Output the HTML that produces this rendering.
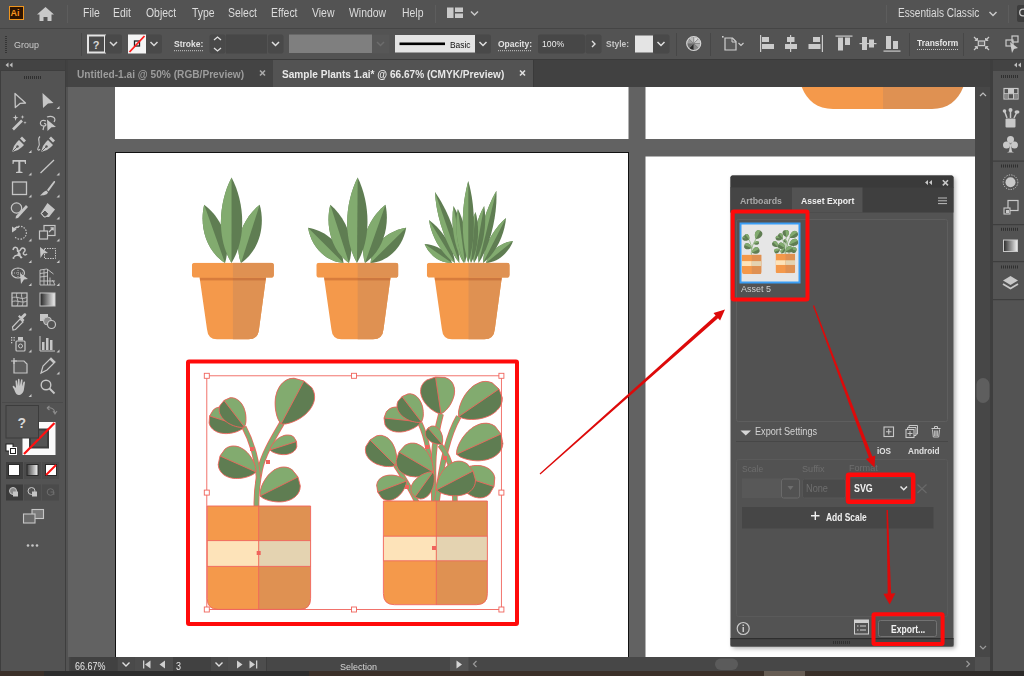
<!DOCTYPE html><html><head><meta charset="utf-8"><style>
html,body{margin:0;padding:0;width:1024px;height:676px;overflow:hidden;background:#535353;font-family:"Liberation Sans", sans-serif;}
.r{position:absolute;}
.t{position:absolute;white-space:nowrap;line-height:1;}
svg{position:absolute;left:0;top:0;}
</style></head><body>

<div class="r" style="left:0px;top:0px;width:1024px;height:28px;background:#535353;"></div>
<div class="r" style="left:0px;top:28px;width:1024px;height:1px;background:#454545;"></div>
<div class="r" style="left:0px;top:29px;width:1024px;height:30px;background:#535353;"></div>
<div class="r" style="left:0px;top:59px;width:1024px;height:1px;background:#3a3a3a;"></div>
<div class="r" style="left:66px;top:60px;width:926px;height:27px;background:#414141;"></div>
<div class="r" style="left:68px;top:60px;width:205px;height:27px;background:#444444;"></div>
<div class="r" style="left:273px;top:60px;width:260px;height:27px;background:#535353;"></div>
<div class="r" style="left:533px;top:60px;width:1px;height:27px;background:#3a3a3a;"></div>
<div class="r" style="left:0px;top:60px;width:66px;height:616px;background:#3e3e3e;"></div>
<div class="r" style="left:0px;top:60px;width:65px;height:10px;background:#434343;"></div>
<div class="r" style="left:1px;top:71px;width:64px;height:600px;background:#535353;"></div>
<div class="r" style="left:68px;top:87px;width:907px;height:570px;background:#626262;"></div>
<div class="r" style="left:975px;top:87px;width:15px;height:570px;background:#474747;"></div>
<div class="r" style="left:990px;top:60px;width:34px;height:616px;background:#3e3e3e;"></div>
<div class="r" style="left:993px;top:60px;width:31px;height:11px;background:#434343;"></div>
<div class="r" style="left:993px;top:71px;width:31px;height:600px;background:#535353;"></div>
<div class="r" style="left:69px;top:657px;width:906px;height:14px;background:#474747;"></div>
<div class="r" style="left:975px;top:657px;width:15px;height:14px;background:#515151;"></div>
<div class="r" style="left:0px;top:671px;width:1024px;height:5px;background:#3b3029;"></div>
<div class="r" style="left:44px;top:671px;width:265px;height:5px;background:#2d2d2d;"></div>
<div class="r" style="left:764px;top:671px;width:41px;height:5px;background:#675d54;"></div>
<div class="r" style="left:808px;top:671px;width:216px;height:5px;background:linear-gradient(90deg,#3a3029,#2b2928);"></div>
<div class="r" style="left:8.6px;top:6.3px;width:13.6px;height:12px;background:#2e1400;border:1px solid #f0961e;"></div>
<div class="t" style="left:10.6px;top:8.68px;font-size:9px;color:#f7961f;font-weight:bold;letter-spacing:-0.2px;">Ai</div>
<svg width="1024" height="30" style="top:0"><path d="M45.5 7 L37 14.5 L39.5 14.5 L39.5 21 L43.5 21 L43.5 17 L47.5 17 L47.5 21 L51.5 21 L51.5 14.5 L54 14.5 Z" fill="#c9c9c9"/><rect x="67" y="5" width="1" height="18" fill="#5d5d5d"/><rect x="435" y="5" width="1" height="18" fill="#5d5d5d"/><rect x="886" y="5" width="1" height="18" fill="#5d5d5d"/><rect x="1008" y="5" width="1" height="18" fill="#5d5d5d"/><rect x="447" y="7.5" width="6.5" height="10.5" fill="#c9c9c9"/><rect x="455" y="7.5" width="8" height="4.5" fill="#c9c9c9"/><rect x="455" y="13.5" width="8" height="4.5" fill="#c9c9c9"/><path d="M471 11.5 L474.5 15 L478 11.5" stroke="#c9c9c9" stroke-width="1.5" fill="none"/><path d="M989.5 12 L993 15.5 L996.5 12" stroke="#c9c9c9" stroke-width="1.5" fill="none"/><rect x="1017" y="5" width="10" height="17" rx="2" fill="#3d3d3d"/><circle cx="1023" cy="12.5" r="3.3" stroke="#c9c9c9" stroke-width="1.3" fill="none"/></svg>
<div class="t" style="left:82.5px;top:6.84px;font-size:12px;color:#dcdcdc;font-weight:normal;transform:scaleX(0.87);transform-origin:0 0;">File</div>
<div class="t" style="left:112.8px;top:6.84px;font-size:12px;color:#dcdcdc;font-weight:normal;transform:scaleX(0.87);transform-origin:0 0;">Edit</div>
<div class="t" style="left:145.5px;top:6.84px;font-size:12px;color:#dcdcdc;font-weight:normal;transform:scaleX(0.87);transform-origin:0 0;">Object</div>
<div class="t" style="left:191.6px;top:6.84px;font-size:12px;color:#dcdcdc;font-weight:normal;transform:scaleX(0.87);transform-origin:0 0;">Type</div>
<div class="t" style="left:228.3px;top:6.84px;font-size:12px;color:#dcdcdc;font-weight:normal;transform:scaleX(0.87);transform-origin:0 0;">Select</div>
<div class="t" style="left:271px;top:6.84px;font-size:12px;color:#dcdcdc;font-weight:normal;transform:scaleX(0.87);transform-origin:0 0;">Effect</div>
<div class="t" style="left:311.9px;top:6.84px;font-size:12px;color:#dcdcdc;font-weight:normal;transform:scaleX(0.87);transform-origin:0 0;">View</div>
<div class="t" style="left:348.6px;top:6.84px;font-size:12px;color:#dcdcdc;font-weight:normal;transform:scaleX(0.87);transform-origin:0 0;">Window</div>
<div class="t" style="left:401.7px;top:6.84px;font-size:12px;color:#dcdcdc;font-weight:normal;transform:scaleX(0.87);transform-origin:0 0;">Help</div>
<div class="t" style="left:897.7px;top:6.84px;font-size:12px;color:#dcdcdc;font-weight:normal;transform:scaleX(0.84);transform-origin:0 0;">Essentials Classic</div>
<svg width="1024" height="60" style="top:0"><rect x="5" y="36" width="2" height="1" fill="#353535"/><rect x="5" y="38" width="2" height="1" fill="#353535"/><rect x="5" y="40" width="2" height="1" fill="#353535"/><rect x="5" y="42" width="2" height="1" fill="#353535"/><rect x="5" y="44" width="2" height="1" fill="#353535"/><rect x="5" y="46" width="2" height="1" fill="#353535"/><rect x="5" y="48" width="2" height="1" fill="#353535"/><rect x="5" y="50" width="2" height="1" fill="#353535"/><rect x="5" y="52" width="2" height="1" fill="#353535"/><rect x="81" y="33" width="1" height="23" fill="#474747"/><rect x="88" y="35.5" width="17" height="17" fill="#4a4a4a" stroke="#e4e4e4" stroke-width="2"/><rect x="105" y="34.5" width="17" height="19" rx="2" fill="#494949"/><path d="M110 42 L113.5 45.5 L117 42" stroke="#d8d8d8" stroke-width="1.5" fill="none"/><rect x="128" y="34.5" width="18" height="19" fill="#f4f4f4"/><rect x="134.5" y="41" width="5" height="5" fill="none" stroke="#222" stroke-width="1.3"/><path d="M129.5 52 L144.5 36" stroke="#ff1a1a" stroke-width="1.8"/><rect x="146" y="34.5" width="16" height="19" rx="2" fill="#494949"/><path d="M150.5 42 L154 45.5 L157.5 42" stroke="#d8d8d8" stroke-width="1.5" fill="none"/><path d="M174 50.7 L203 50.7" stroke="#c8c8c8" stroke-width="1" stroke-dasharray="1 1"/><rect x="209.5" y="34.5" width="16" height="19" rx="2" fill="#494949"/><path d="M214 40 L217.5 37 L221 40 M214 48 L217.5 51 L221 48" stroke="#e0e0e0" stroke-width="1.3" fill="none"/><rect x="226" y="34.5" width="41" height="19" fill="#474747"/><rect x="268" y="34.5" width="15.5" height="19" rx="2" fill="#494949"/><path d="M272 42 L275.5 45.5 L279 42" stroke="#e0e0e0" stroke-width="1.5" fill="none"/><rect x="289" y="34.5" width="83" height="18.5" fill="#7f7f7f"/><rect x="372" y="34.5" width="17.5" height="19" rx="1" fill="#575757"/><path d="M377 42 L380.5 45.5 L384 42" stroke="#6c6c6c" stroke-width="1.5" fill="none"/><rect x="395" y="35" width="80" height="17.5" fill="#e4e4e4"/><rect x="399.5" y="42.5" width="45.5" height="2.6" fill="#000"/><rect x="475" y="34.5" width="16" height="19" rx="2" fill="#494949"/><path d="M479.5 42 L483 45.5 L486.5 42" stroke="#e0e0e0" stroke-width="1.5" fill="none"/><path d="M498 50.7 L532 50.7" stroke="#c8c8c8" stroke-width="1" stroke-dasharray="1 1"/><rect x="538" y="34.5" width="47" height="19" rx="2" fill="#474747"/><rect x="585.5" y="34.5" width="16" height="19" rx="2" fill="#494949"/><path d="M592 41 L595 44 L592 47" stroke="#e0e0e0" stroke-width="1.4" fill="none"/><rect x="635" y="35.5" width="18" height="17" fill="#e4e4e4"/><rect x="653" y="34.5" width="16.5" height="19" rx="2" fill="#494949"/><path d="M657.5 42 L661 45.5 L664.5 42" stroke="#e0e0e0" stroke-width="1.5" fill="none"/><rect x="676" y="33" width="1" height="23" fill="#474747"/><path d="M693.7 43.5 L693.70 36.70 A6.8 6.8 0 0 1 698.51 38.69 Z" fill="#d8d8d8" stroke="#7a7a7a" stroke-width="0.5"/><path d="M693.7 43.5 L698.51 38.69 A6.8 6.8 0 0 1 700.50 43.50 Z" fill="#c8c8c8" stroke="#7a7a7a" stroke-width="0.5"/><path d="M693.7 43.5 L700.50 43.50 A6.8 6.8 0 0 1 698.51 48.31 Z" fill="#b0b0b0" stroke="#7a7a7a" stroke-width="0.5"/><path d="M693.7 43.5 L698.51 48.31 A6.8 6.8 0 0 1 693.70 50.30 Z" fill="#8a8a8a" stroke="#7a7a7a" stroke-width="0.5"/><path d="M693.7 43.5 L693.70 50.30 A6.8 6.8 0 0 1 688.89 48.31 Z" fill="#2a2a2a" stroke="#7a7a7a" stroke-width="0.5"/><path d="M693.7 43.5 L688.89 48.31 A6.8 6.8 0 0 1 686.90 43.50 Z" fill="#6a6a6a" stroke="#7a7a7a" stroke-width="0.5"/><path d="M693.7 43.5 L686.90 43.50 A6.8 6.8 0 0 1 688.89 38.69 Z" fill="#9a9a9a" stroke="#7a7a7a" stroke-width="0.5"/><path d="M693.7 43.5 L688.89 38.69 A6.8 6.8 0 0 1 693.70 36.70 Z" fill="#bcbcbc" stroke="#7a7a7a" stroke-width="0.5"/><circle cx="693.7" cy="43.5" r="7" fill="none" stroke="#d4d4d4" stroke-width="1.2"/><rect x="710" y="33" width="1" height="23" fill="#474747"/><path d="M725 38 L732.5 38 L736 41.5 L736 50 L725 50 Z" fill="#5a5a5a" stroke="#cfcfcf" stroke-width="1.2"/><path d="M732 38 L732 42 L736 42" stroke="#cfcfcf" stroke-width="1" fill="none"/><rect x="722" y="36" width="1.6" height="1.6" fill="#cfcfcf"/><path d="M738.5 43 L741 45.5 L743.5 43" stroke="#cfcfcf" stroke-width="1.1" fill="none"/><rect x="760" y="35" width="1.2" height="17" fill="#cbcbcb"/><rect x="762" y="37" width="7" height="5" fill="#cbcbcb"/><rect x="762" y="44" width="12" height="5" fill="#cbcbcb"/><rect x="790" y="35" width="1.2" height="17" fill="#cbcbcb"/><rect x="787" y="37" width="7.5" height="5" fill="#cbcbcb"/><rect x="785" y="44" width="12" height="5" fill="#cbcbcb"/><rect x="821.8" y="35" width="1.2" height="17" fill="#cbcbcb"/><rect x="813" y="37" width="7" height="5" fill="#cbcbcb"/><rect x="808.5" y="44" width="12" height="5" fill="#cbcbcb"/><rect x="835.5" y="35.5" width="17" height="1.2" fill="#cbcbcb"/><rect x="838" y="37.5" width="5" height="13" fill="#cbcbcb"/><rect x="845" y="37.5" width="5" height="7.5" fill="#cbcbcb"/><rect x="859.5" y="43" width="17" height="1.2" fill="#cbcbcb"/><rect x="862" y="37" width="5" height="13" fill="#cbcbcb"/><rect x="869" y="39.5" width="5" height="8" fill="#cbcbcb"/><rect x="883.5" y="50.5" width="17" height="1.2" fill="#cbcbcb"/><rect x="886" y="36" width="5" height="13" fill="#cbcbcb"/><rect x="893" y="41" width="5" height="8" fill="#cbcbcb"/><rect x="909" y="33" width="1" height="23" fill="#474747"/><path d="M917 49.5 L958 49.5" stroke="#c8c8c8" stroke-width="1" stroke-dasharray="1 1"/><rect x="963" y="33" width="1" height="23" fill="#474747"/><rect x="978.3" y="41" width="6.3" height="4.6" fill="#6a6a6a" stroke="#cbcbcb" stroke-width="1.2"/><path d="M974 37 L977 40 M989 37 L986 40 M974 50 L977 47 M989 50 L986 47" stroke="#cbcbcb" stroke-width="1.2"/><path d="M975 40.5 L977.5 40.5 L977.5 38 Z M988 40.5 L985.5 40.5 L985.5 38 Z M975 46.5 L977.5 46.5 L977.5 49 Z M988 46.5 L985.5 46.5 L985.5 49 Z" fill="#cbcbcb" stroke="#cbcbcb" stroke-width="0.8"/><rect x="1006" y="40" width="7" height="6" fill="none" stroke="#cbcbcb" stroke-width="1.2"/><rect x="1012" y="36" width="6" height="6" fill="none" stroke="#cbcbcb" stroke-width="1.2"/><path d="M1010 42 L1018 48 L1014 49 L1012 53 Z" fill="#cbcbcb"/></svg>
<div class="t" style="left:13.9px;top:39.77px;font-size:9.6px;color:#cacaca;font-weight:normal;transform:scaleX(0.933);transform-origin:0 0;">Group</div>
<div class="t" style="left:173.9px;top:39.83px;font-size:9.3px;color:#e2e2e2;font-weight:bold;transform:scaleX(0.9138);transform-origin:0 0;">Stroke:</div>
<div class="t" style="left:449.5px;top:39.96px;font-size:9.5px;color:#111;font-weight:normal;transform:scaleX(0.886);transform-origin:0 0;">Basic</div>
<div class="t" style="left:498.4px;top:39.63px;font-size:9.3px;color:#e2e2e2;font-weight:bold;transform:scaleX(0.9143);transform-origin:0 0;">Opacity:</div>
<div class="t" style="left:541.6px;top:39.16px;font-size:9.5px;color:#ececec;font-weight:normal;transform:scaleX(0.9131);transform-origin:0 0;">100%</div>
<div class="t" style="left:606.3px;top:38.96px;font-size:9.5px;color:#c8c8c8;font-weight:bold;transform:scaleX(0.8889);transform-origin:0 0;">Style:</div>
<div class="t" style="left:916.5px;top:39.33px;font-size:9.3px;color:#e8e8e8;font-weight:bold;transform:scaleX(0.9077);transform-origin:0 0;">Transform</div>
<div class="t" style="left:92.8px;top:39.89px;font-size:11px;color:#d8d8d8;font-weight:bold;">?</div>
<div class="t" style="left:77.1px;top:68.74px;font-size:10.7px;color:#9c9c9c;font-weight:bold;transform:scaleX(0.9489);transform-origin:0 0;">Untitled-1.ai @ 50% (RGB/Preview)</div>
<div class="t" style="left:282.0px;top:68.74px;font-size:10.7px;color:#e8e8e8;font-weight:bold;transform:scaleX(0.9435);transform-origin:0 0;">Sample Plants 1.ai* @ 66.67% (CMYK/Preview)</div>
<svg width="1024" height="90" style="top:0"><path d="M260 70.5 L265 75.5 M265 70.5 L260 75.5" stroke="#aaaaaa" stroke-width="1.6"/><path d="M520 70.5 L525 75.5 M525 70.5 L520 75.5" stroke="#e0e0e0" stroke-width="1.6"/><path d="M5.5 65 L8.5 62.5 L8.5 67.5 Z M9.5 65 L12.5 62.5 L12.5 67.5 Z" fill="#bdbdbd"/><path d="M1014 65 L1017 62.5 L1017 67.5 Z M1018 65 L1021 62.5 L1021 67.5 Z" fill="#bdbdbd"/><rect x="24" y="76" width="1" height="3" fill="#2f2f2f"/><rect x="26" y="76" width="1" height="3" fill="#2f2f2f"/><rect x="28" y="76" width="1" height="3" fill="#2f2f2f"/><rect x="30" y="76" width="1" height="3" fill="#2f2f2f"/><rect x="32" y="76" width="1" height="3" fill="#2f2f2f"/><rect x="34" y="76" width="1" height="3" fill="#2f2f2f"/><rect x="36" y="76" width="1" height="3" fill="#2f2f2f"/><rect x="38" y="76" width="1" height="3" fill="#2f2f2f"/><rect x="40" y="76" width="1" height="3" fill="#2f2f2f"/><rect x="1001" y="75" width="1" height="3" fill="#2f2f2f"/><rect x="1003" y="75" width="1" height="3" fill="#2f2f2f"/><rect x="1005" y="75" width="1" height="3" fill="#2f2f2f"/><rect x="1007" y="75" width="1" height="3" fill="#2f2f2f"/><rect x="1009" y="75" width="1" height="3" fill="#2f2f2f"/><rect x="1011" y="75" width="1" height="3" fill="#2f2f2f"/><rect x="1013" y="75" width="1" height="3" fill="#2f2f2f"/><rect x="1015" y="75" width="1" height="3" fill="#2f2f2f"/><rect x="1017" y="75" width="1" height="3" fill="#2f2f2f"/></svg>
<svg width="70" height="560" style="top:0"><path d="M15 93.5 L25.5 103 L20.3 103.3 L15.3 107.5 Z" fill="none" stroke="#c6c6c6" stroke-width="1.3" stroke-linejoin="round"/><path d="M42.5 93 L53.5 103 L48 103.5 L43 108 Z" fill="#c6c6c6"/><path d="M59.5 106 L59.5 109 L56.5 109 Z" fill="#c6c6c6"/><path d="M13 129.5 L22 120.5" stroke="#c6c6c6" stroke-width="2.6"/><path d="M15.5 114.5 L16.3 117 L18.5 117.3 L16.5 118.3 L15.5 121 L14.8 118.3 L12.5 117.5 L14.8 117 Z M22.5 115 L23 116.5 L24.5 117 L23 117.5 L22.5 119 L22 117.5 L20.5 117 L22 116.5 Z M25 121 L25.4 122.3 L26.7 122.7 L25.4 123 L25 124.5 L24.6 123 L23.3 122.7 L24.6 122.3 Z" fill="#c6c6c6"/><path d="M46 121 C40 118 38 126 44 126 C47 126 46 123 44 123.5 M44 126 L43 130" fill="none" stroke="#c6c6c6" stroke-width="1.2"/><path d="M47 117 C52 115 57 118 54 122" fill="none" stroke="#c6c6c6" stroke-width="1.2"/><path d="M47 119.5 L56 127 L51.5 127.3 L47.5 131 Z" fill="#c6c6c6"/><path d="M19 140 L24 145 L22 147 L18 150 L12 152 L14 146 L17 142 Z" fill="#c6c6c6"/><path d="M20 138.5 L22 136.5 L26 140.5 L24 142.5 Z" fill="#c6c6c6"/><path d="M12.5 151.5 L17 147" stroke="#535353" stroke-width="0.9"/><circle cx="17.5" cy="146.5" r="1.2" fill="#535353"/><path d="M31.5 150 L31.5 153 L28.5 153 Z" fill="#c6c6c6"/><path d="M48 140 L53 145 L51 147 L47 150 L41 152 L43 146 L46 142 Z" fill="#c6c6c6"/><path d="M49 138.5 L51 136.5 L55 140.5 L53 142.5 Z" fill="#c6c6c6"/><path d="M41.5 151.5 L46 147" stroke="#535353" stroke-width="0.9"/><circle cx="46.5" cy="146.5" r="1.2" fill="#535353"/><path d="M40 136.5 C36 140 42 142 38 148 C37 150 39 151 40 149" fill="none" stroke="#c6c6c6" stroke-width="1.1"/><path d="M12.5 160 L26 160 L26 164 L25 164 L24.5 161.8 L20.3 161.8 L20.3 171.5 L22.5 172 L22.5 173 L16 173 L16 172 L18.3 171.5 L18.3 161.8 L14 161.8 L13.5 164 L12.5 164 Z" fill="#c6c6c6"/><path d="M31.5 172.5 L31.5 175.5 L28.5 175.5 Z" fill="#c6c6c6"/><path d="M40.5 173 L54 160" stroke="#c6c6c6" stroke-width="1.3"/><path d="M59.5 172.5 L59.5 175.5 L56.5 175.5 Z" fill="#c6c6c6"/><rect x="12.5" y="182" width="14" height="12.5" fill="#5b5b5b" stroke="#c6c6c6" stroke-width="1.3"/><path d="M31.5 194.5 L31.5 197.5 L28.5 197.5 Z" fill="#c6c6c6"/><path d="M47 190 L53.5 181.5 C55 180.5 55.5 181.5 54.8 182.8 L48.5 191.5 Z" fill="#c6c6c6"/><path d="M46.3 190.6 L48 192.3 C47 195 44 195.5 40 195.5 C42 194 43.5 191.5 46.3 190.6 Z" fill="#c6c6c6"/><path d="M59.5 194.5 L59.5 197.5 L56.5 197.5 Z" fill="#c6c6c6"/><circle cx="16.5" cy="208" r="5.2" fill="#5d5d5d" stroke="#c6c6c6" stroke-width="1.2"/><path d="M16 216 L26 205 L28 207 L18 218 L15.5 218.5 Z" fill="#c6c6c6"/><path d="M31.5 216.5 L31.5 219.5 L28.5 219.5 Z" fill="#c6c6c6"/><path d="M47.5 203 L55 209.5 L49 217 L44 217 L40.5 213.5 Z" fill="#c6c6c6"/><path d="M41.5 213 L44.5 210 L48.5 214 L46 216.5 L44 216.5 Z" fill="#535353"/><path d="M41.5 213.5 L45 210 L48.8 213.8 L45.8 217 L44 217 Z" fill="none" stroke="#c6c6c6" stroke-width="1"/><path d="M59.5 216.5 L59.5 219.5 L56.5 219.5 Z" fill="#c6c6c6"/><path d="M14 230 A6.5 6.5 0 1 1 15 237" fill="none" stroke="#c6c6c6" stroke-width="1.2" stroke-dasharray="1.5 1.3"/><path d="M19 227 A6.5 6.5 0 0 0 13 231" fill="none" stroke="#c6c6c6" stroke-width="1.5"/><path d="M12 226.5 L16.5 229.5 L12 232.5 Z" fill="#c6c6c6"/><path d="M31.5 238.5 L31.5 241.5 L28.5 241.5 Z" fill="#c6c6c6"/><rect x="44" y="225.5" width="11" height="10" fill="none" stroke="#c6c6c6" stroke-width="1.2"/><rect x="39.5" y="231" width="8" height="8" fill="#535353" stroke="#c6c6c6" stroke-width="1.2"/><path d="M49 232 L53 228 M50.5 227.8 L53.2 227.8 L53.2 230.5" fill="none" stroke="#c6c6c6" stroke-width="1.2"/><path d="M59.5 238.5 L59.5 241.5 L56.5 241.5 Z" fill="#c6c6c6"/><path d="M13 250 C14 246 18 247 17.5 250 C17 253 20 251 21 249 C23 246 27 250 24 252 C22 254 25 256 27 254 M14 257 C16 254 20 255 22 258 M17 248 L21 258" fill="none" stroke="#c6c6c6" stroke-width="1.5"/><circle cx="19" cy="254" r="1.6" fill="#c6c6c6"/><circle cx="13.5" cy="258" r="1" fill="#c6c6c6"/><path d="M31.5 260 L31.5 263 L28.5 263 Z" fill="#c6c6c6"/><path d="M40 247 L48 253 L43.5 253.5 L40.5 258 Z" fill="#c6c6c6"/><rect x="44.5" y="248.5" width="11" height="10" fill="none" stroke="#c6c6c6" stroke-width="1" stroke-dasharray="1.5 1"/><path d="M59.5 260 L59.5 263 L56.5 263 Z" fill="#c6c6c6"/><ellipse cx="18" cy="273" rx="6.5" ry="5" fill="none" stroke="#c6c6c6" stroke-width="1.2"/><path d="M12 273 L24 273 M18 268 L18 278" stroke="#c6c6c6" stroke-width="0.8" stroke-dasharray="1 1"/><path d="M20 273 L28 279 L24 279.5 L21 284 Z" fill="#c6c6c6"/><path d="M31.5 283 L31.5 286 L28.5 286 Z" fill="#c6c6c6"/><path d="M40 270 L47 269 L53.5 274 M40 270 L40 285 L55 285 M40 273.5 L47.5 272.5 M40 277 L48 276 M40 281 L55 281 M44 269.5 L44 285 M47.5 269 L47.5 285 M50 277.5 L50 285 M52.5 280 L55 285" fill="none" stroke="#c6c6c6" stroke-width="0.9"/><path d="M59.5 283 L59.5 286 L56.5 286 Z" fill="#c6c6c6"/><rect x="12" y="293" width="15" height="13" fill="none" stroke="#c6c6c6" stroke-width="1.2"/><path d="M12 298 C16 295 22 301 27 297 M12 302 C16 299 22 304 27 301 M17 293 C15 297 20 301 17 306 M22 293 C20 297 25 301 22 306" fill="none" stroke="#c6c6c6" stroke-width="0.9"/><defs><linearGradient id="tg" x1="0" x2="1"><stop offset="0" stop-color="#222"/><stop offset="1" stop-color="#f0f0f0"/></linearGradient><linearGradient id="tg2" x1="0" x2="1"><stop offset="0" stop-color="#444"/><stop offset="1" stop-color="#fafafa"/></linearGradient></defs><rect x="40" y="293" width="15" height="13" fill="url(#tg)" stroke="#c6c6c6" stroke-width="1"/><path d="M13 330 L12.5 327 L20 319 L23 322 L15.5 329.5 Z" fill="none" stroke="#c6c6c6" stroke-width="1.2"/><path d="M21 316.5 L24 313.5 C25.5 312.5 27 314 26 315.5 L23 318.5 L24.5 320 L23 321.5 L18 316.5 L19.5 315 Z" fill="#c6c6c6"/><path d="M31.5 327.5 L31.5 330.5 L28.5 330.5 Z" fill="#c6c6c6"/><rect x="40" y="314" width="8" height="7" fill="#c6c6c6"/><circle cx="47.5" cy="321" r="4" fill="#8a8a8a" stroke="#c6c6c6" stroke-width="1"/><circle cx="51.5" cy="324.5" r="4" fill="#535353" stroke="#c6c6c6" stroke-width="1.2"/><rect x="16" y="341" width="9" height="10" rx="1" fill="none" stroke="#c6c6c6" stroke-width="1.2"/><rect x="18" y="337" width="5" height="3.5" fill="#c6c6c6"/><circle cx="20.5" cy="346" r="2" fill="none" stroke="#c6c6c6" stroke-width="1"/><rect x="11.0" y="337.0" width="1.3" height="1.3" fill="#c6c6c6"/><rect x="13.5" y="337.0" width="1.3" height="1.3" fill="#c6c6c6"/><rect x="11.0" y="339.5" width="1.3" height="1.3" fill="#c6c6c6"/><rect x="13.5" y="339.5" width="1.3" height="1.3" fill="#c6c6c6"/><rect x="11.0" y="342.0" width="1.3" height="1.3" fill="#c6c6c6"/><path d="M31.5 349.5 L31.5 352.5 L28.5 352.5 Z" fill="#c6c6c6"/><path d="M40 336 L40 351 L55 351" fill="none" stroke="#c6c6c6" stroke-width="1"/><rect x="42" y="342" width="2.5" height="8" fill="#c6c6c6"/><rect x="46" y="338" width="2.5" height="12" fill="#c6c6c6"/><rect x="50" y="340" width="2.5" height="10" fill="#c6c6c6"/><path d="M59.5 349.5 L59.5 352.5 L56.5 352.5 Z" fill="#c6c6c6"/><path d="M14 361 L24 361 L27 364 L27 373 L14 373 Z" fill="#5d5d5d" stroke="#c6c6c6" stroke-width="1.2"/><path d="M11 361 L17 361 M14 358 L14 364" stroke="#c6c6c6" stroke-width="1.2"/><path d="M41 373 L43 366 L51 358 L55 362 L47 370 Z" fill="none" stroke="#c6c6c6" stroke-width="1.2"/><path d="M51 358 L55 362 L53.5 363.5 L49.5 359.5 Z" fill="#c6c6c6"/><path d="M59.5 371.5 L59.5 374.5 L56.5 374.5 Z" fill="#c6c6c6"/><path d="M14 389 C12 387 12.5 385 14 386 L16 388 L15.5 381 C15.5 380 17 380 17 381 L17.5 386 L18 379.5 C18 378.5 19.5 378.5 19.5 379.5 L19.8 386 L21 380 C21.2 379 22.6 379.2 22.5 380.2 L22 386.5 L23.5 382 C23.8 381 25.2 381.3 25 382.3 L24 389 C23.5 393 21 395 18.5 395 C16.5 395 15 392 14 389 Z" fill="#c6c6c6"/><path d="M31.5 394 L31.5 397 L28.5 397 Z" fill="#c6c6c6"/><circle cx="46" cy="385" r="4.8" fill="none" stroke="#c6c6c6" stroke-width="1.4"/><path d="M49.5 388.5 L54.5 393.5" stroke="#c6c6c6" stroke-width="2"/><rect x="2" y="402" width="61" height="1" fill="#4a4a4a"/><rect x="22.5" y="422" width="33" height="33" fill="#fafafa"/><rect x="29" y="428.5" width="20" height="20" fill="#3c3c3c"/><rect x="31" y="430.5" width="16" height="16" fill="#535353"/><path d="M24 454 L54.5 423" stroke="#ff1010" stroke-width="2.2"/><rect x="6" y="405.5" width="32.5" height="32.5" fill="#535353" stroke="#3c3c3c" stroke-width="1"/><path d="M47 408 C51 407 55 409 55 413 M53 411 L55 414 L57 411 M47 408 L49.5 406 M47 408 L49.5 410" fill="none" stroke="#8a8a8a" stroke-width="1.1"/><rect x="6" y="444" width="7" height="7" fill="#fff" stroke="#222" stroke-width="1"/><rect x="9.5" y="447.5" width="7" height="7" fill="#222" stroke="#fff" stroke-width="1"/><rect x="11" y="449" width="4" height="4" fill="#fff"/><rect x="6" y="462" width="17" height="17" fill="#3e3e3e"/><rect x="24" y="462" width="17" height="17" fill="#4b4b4b"/><rect x="42" y="462" width="17" height="17" fill="#4b4b4b"/><rect x="8.5" y="464.5" width="11" height="11" fill="#fff" stroke="#2a2a2a"/><rect x="27" y="464.5" width="11" height="11" fill="url(#tg2)" stroke="#2a2a2a"/><rect x="45.5" y="464.5" width="11" height="11" fill="#fff" stroke="#2a2a2a"/><path d="M46 475 L56 465" stroke="#ff1010" stroke-width="2"/><rect x="6" y="484.5" width="17" height="16" fill="#3b3b3b"/><rect x="24" y="484.5" width="17" height="16" fill="#4b4b4b"/><rect x="42" y="484.5" width="17" height="16" fill="#4b4b4b"/><circle cx="13" cy="491" r="3.5" fill="#888" stroke="#c6c6c6" stroke-width="1"/><rect x="13" y="491.5" width="5" height="5" fill="#c6c6c6"/><circle cx="31.5" cy="491" r="3.5" fill="#535353" stroke="#c6c6c6" stroke-width="1"/><rect x="32" y="491.5" width="5" height="5" fill="#c6c6c6"/><circle cx="50.5" cy="492" r="3.3" fill="none" stroke="#6e6e6e" stroke-width="1"/><path d="M50.5 492 L53.8 492 L53.8 495" fill="none" stroke="#6e6e6e"/><rect x="32" y="509.5" width="11.5" height="9" fill="#7a7a7a" stroke="#c6c6c6" stroke-width="1.1"/><rect x="23.5" y="514" width="11.5" height="9" fill="#6a6a6a" stroke="#c6c6c6" stroke-width="1.1"/><circle cx="28" cy="545.5" r="1.3" fill="#c6c6c6"/><circle cx="32.5" cy="545.5" r="1.3" fill="#c6c6c6"/><circle cx="37" cy="545.5" r="1.3" fill="#c6c6c6"/></svg>
<div class="t" style="left:17.5px;top:416.15px;font-size:14px;color:#d8d8d8;font-weight:bold;">?</div>
<svg width="1024" height="676" style="top:0"><defs><clipPath id="cvclip"><rect x="68" y="87" width="907" height="570"/></clipPath><filter id="abs" x="-5%" y="-5%" width="110%" height="110%"><feDropShadow dx="1" dy="1" stdDeviation="0.8" flood-color="#000" flood-opacity="0.35"/></filter></defs><g clip-path="url(#cvclip)"><rect x="115" y="60" width="513.5" height="79" fill="#fff"/><rect x="645.5" y="60" width="330" height="79" fill="#fff"/><rect x="115.5" y="152.5" width="513" height="510" fill="#fff" stroke="#111" stroke-width="1"/><rect x="645.5" y="156.5" width="330" height="510" fill="#fff"/><path d="M799.5 80 L883 80 L883 109 L833 109 C815 109 804 98 799.5 80 Z" fill="#f4994b"/><path d="M883 80 L965.5 80 C961 98 950 109 932 109 L883 109 Z" fill="#df9152"/><path d="M225 263 C205.3 250.3 199.3 224.9 204.2 204.8 C220.8 217.3 232.2 240.7 225 263 Z" fill="#5f7d52"/><path d="M225 263 C205.3 250.3 199.3 224.9 204.2 204.8 Z" fill="#82ab6f"/><path d="M241 263 C233 241.2 243.6 217.6 259.7 204.8 C265.3 224.6 260.2 249.9 241 263 Z" fill="#5f7d52"/><path d="M241 263 C233 241.2 243.6 217.6 259.7 204.8 Z" fill="#82ab6f"/><path d="M231.5 263 C215.8 237.3 219 201.4 231.6 177.4 C244.2 201.4 247.3 237.3 231.5 263 Z" fill="#5f7d52"/><path d="M231.5 263 C215.8 237.3 219 201.4 231.6 177.4 Z" fill="#82ab6f"/><clipPath id="pc191"><path d="M199.4 276.1 L266.2 276.1 L259 329.2 Q258.2 339.2 248.5 339.2 L217 339.2 Q207.8 339.2 207 329.2 Z"/></clipPath><g clip-path="url(#pc191)"><rect x="191.9" y="275.6" width="81.99999999999997" height="70" fill="#f4994b"/><rect x="232.9" y="275.6" width="40.99999999999997" height="70" fill="#df9152"/><rect x="191.9" y="277.6" width="81.99999999999997" height="2.8" fill="#b5582a" opacity="0.45"/></g><clipPath id="rc191"><rect x="191.9" y="262.7" width="81.99999999999997" height="14.900000000000034" rx="2.8"/></clipPath><g clip-path="url(#rc191)"><rect x="191.9" y="262.7" width="81.99999999999997" height="20" fill="#f4994b"/><rect x="232.9" y="262.7" width="40.99999999999997" height="20" fill="#df9152"/></g><path d="M343.5 263 C323.9 261.4 310.8 244.8 308.1 227.7 C325.2 230.4 341.9 243.4 343.5 263 Z" fill="#5f7d52"/><path d="M343.5 263 C323.9 261.4 310.8 244.8 308.1 227.7 Z" fill="#82ab6f"/><path d="M370.5 263 C372.2 243.3 389 230.3 406.2 227.7 C403.4 244.8 390.2 261.5 370.5 263 Z" fill="#5f7d52"/><path d="M370.5 263 C372.2 243.3 389 230.3 406.2 227.7 Z" fill="#82ab6f"/><path d="M349 263 C330.5 249.7 325.3 224.4 330.3 204.8 C345.8 217.8 356.2 241.4 349 263 Z" fill="#5f7d52"/><path d="M349 263 C330.5 249.7 325.3 224.4 330.3 204.8 Z" fill="#82ab6f"/><path d="M365 263 C358.4 241.1 369.6 217.5 385.5 204.8 C389.9 224.7 383.9 250 365 263 Z" fill="#5f7d52"/><path d="M365 263 C358.4 241.1 369.6 217.5 385.5 204.8 Z" fill="#82ab6f"/><path d="M357 263 C342.2 237.2 345.5 201.3 357.7 177.4 C369.5 201.5 372.2 237.4 357 263 Z" fill="#5f7d52"/><path d="M357 263 C342.2 237.2 345.5 201.3 357.7 177.4 Z" fill="#82ab6f"/><clipPath id="pc316"><path d="M323.8 276.1 L390.7 276.1 L383.5 329.2 Q382.7 339.2 373 339.2 L341.4 339.2 Q332.2 339.2 331.4 329.2 Z"/></clipPath><g clip-path="url(#pc316)"><rect x="316.3" y="275.6" width="82.09999999999997" height="70" fill="#f4994b"/><rect x="357.7" y="275.6" width="40.69999999999999" height="70" fill="#df9152"/><rect x="316.3" y="277.6" width="82.09999999999997" height="2.8" fill="#b5582a" opacity="0.45"/></g><clipPath id="rc316"><rect x="316.3" y="262.7" width="82.09999999999997" height="14.900000000000034" rx="2.8"/></clipPath><g clip-path="url(#rc316)"><rect x="316.3" y="262.7" width="82.09999999999997" height="20" fill="#f4994b"/><rect x="357.7" y="262.7" width="40.69999999999999" height="20" fill="#df9152"/></g><path d="M452 263 C439.5 263.5 428.9 254.3 424.6 244 C435.7 244.4 448.1 251.1 452 263 Z" fill="#5f7d52"/><path d="M452 263 C439.5 263.5 428.9 254.3 424.6 244 Z" fill="#82ab6f"/><path d="M486 263 C489.4 250.6 501.6 242.5 513 241 C509.2 251.8 498.8 262.2 486 263 Z" fill="#5f7d52"/><path d="M486 263 C489.4 250.6 501.6 242.5 513 241 Z" fill="#82ab6f"/><path d="M455 263 C440.8 254 431.1 235.1 429 220 C441.4 228.9 453.6 246.2 455 263 Z" fill="#5f7d52"/><path d="M455 263 C440.8 254 431.1 235.1 429 220 Z" fill="#82ab6f"/><path d="M483 263 C483.2 246.1 494.2 227.9 506 218 C504.9 233.3 496.6 252.9 483 263 Z" fill="#5f7d52"/><path d="M483 263 C483.2 246.1 494.2 227.9 506 218 Z" fill="#82ab6f"/><path d="M459.4 263 C444.7 244.2 435.9 213.9 435 192 C447.7 209.9 459.5 239.2 459.4 263 Z" fill="#5f7d52"/><path d="M459.4 263 C444.7 244.2 435.9 213.9 435 192 Z" fill="#82ab6f"/><path d="M478.6 263 C476.4 239.4 485.4 209.5 496.4 190.7 C497.5 212.4 491.5 243.2 478.6 263 Z" fill="#5f7d52"/><path d="M478.6 263 C476.4 239.4 485.4 209.5 496.4 190.7 Z" fill="#82ab6f"/><path d="M463.8 263 C453.6 247.2 450.7 223 453.5 206 C462.1 220.9 467.8 244.6 463.8 263 Z" fill="#5f7d52"/><path d="M463.8 263 C453.6 247.2 450.7 223 453.5 206 Z" fill="#82ab6f"/><path d="M474 263 C470 244.6 475.7 220.9 484.2 206 C487 223 484.1 247.2 474 263 Z" fill="#5f7d52"/><path d="M474 263 C470 244.6 475.7 220.9 484.2 206 Z" fill="#82ab6f"/><path d="M465 263 C456.2 247.7 454.5 224.8 457.9 209 C465.2 223.4 469.6 245.9 465 263 Z" fill="#5f7d52"/><path d="M465 263 C456.2 247.7 454.5 224.8 457.9 209 Z" fill="#82ab6f"/><path d="M471 263 C465.7 247.1 468.9 225.8 475.6 212 C479.7 226.8 479.1 248.3 471 263 Z" fill="#5f7d52"/><path d="M471 263 C465.7 247.1 468.9 225.8 475.6 212 Z" fill="#82ab6f"/><path d="M468.3 263 C460.1 238.4 461.7 204 468.3 181 C474.9 204 476.6 238.4 468.3 263 Z" fill="#5f7d52"/><path d="M468.3 263 C460.1 238.4 461.7 204 468.3 181 Z" fill="#82ab6f"/><clipPath id="pc426"><path d="M434.3 276.1 L502 276.1 L494.8 329.2 Q494 339.2 484.3 339.2 L451.9 339.2 Q442.7 339.2 441.9 329.2 Z"/></clipPath><g clip-path="url(#pc426)"><rect x="426.8" y="275.6" width="82.89999999999998" height="70" fill="#f4994b"/><rect x="468.5" y="275.6" width="41.19999999999999" height="70" fill="#df9152"/><rect x="426.8" y="277.6" width="82.89999999999998" height="2.8" fill="#b5582a" opacity="0.45"/></g><clipPath id="rc426"><rect x="426.8" y="262.7" width="82.89999999999998" height="14.900000000000034" rx="2.8"/></clipPath><g clip-path="url(#rc426)"><rect x="426.8" y="262.7" width="82.89999999999998" height="20" fill="#f4994b"/><rect x="468.5" y="262.7" width="41.19999999999999" height="20" fill="#df9152"/></g><path d="M256.5 507 C256 492 258 480 260 470 C263 455 272 440 282 423" fill="none" stroke="#f0645c" stroke-width="5.800000000000001" stroke-linecap="butt"/><path d="M256.5 507 C256 492 258 480 260 470 C263 455 272 440 282 423" fill="none" stroke="#82ab6f" stroke-width="4.2" stroke-linecap="butt"/><path d="M258.5 478 C257 462 252 442 244 427" fill="none" stroke="#f0645c" stroke-width="5.2" stroke-linecap="butt"/><path d="M258.5 478 C257 462 252 442 244 427" fill="none" stroke="#82ab6f" stroke-width="3.6" stroke-linecap="butt"/><path d="M281.0 424.0 L278.5 420.1 L277.2 416.9 L276.4 414.0 L275.8 411.1 L275.4 408.4 L275.2 405.8 L275.1 403.2 L275.2 400.8 L275.4 398.4 L275.8 396.1 L276.4 393.9 L277.0 391.7 L277.9 389.7 L278.9 387.7 L280.1 385.8 L281.5 384.0 L283.1 382.4 L285.0 380.9 L287.3 379.6 L290.2 378.6 L294.0 378.2 L304.0 381.0 L304.0 381.0 L311.9 387.7 L313.6 391.2 L314.4 394.1 L314.6 396.7 L314.5 399.2 L314.0 401.4 L313.3 403.6 L312.4 405.6 L311.3 407.5 L310.0 409.4 L308.6 411.1 L307.1 412.8 L305.4 414.4 L303.5 415.9 L301.5 417.4 L299.4 418.8 L297.1 420.0 L294.6 421.2 L291.9 422.3 L289.0 423.2 L285.6 424.0 L281.0 424.0Z" fill="#5f7d52"/><path d="M281.0 424.0 L278.5 420.1 L277.2 416.9 L276.4 414.0 L275.8 411.1 L275.4 408.4 L275.2 405.8 L275.1 403.2 L275.2 400.8 L275.4 398.4 L275.8 396.1 L276.4 393.9 L277.0 391.7 L277.9 389.7 L278.9 387.7 L280.1 385.8 L281.5 384.0 L283.1 382.4 L285.0 380.9 L287.3 379.6 L290.2 378.6 L294.0 378.2 L304.0 381.0Z" fill="#82ab6f"/><path d="M281.0 424.0 L278.5 420.1 L277.2 416.9 L276.4 414.0 L275.8 411.1 L275.4 408.4 L275.2 405.8 L275.1 403.2 L275.2 400.8 L275.4 398.4 L275.8 396.1 L276.4 393.9 L277.0 391.7 L277.9 389.7 L278.9 387.7 L280.1 385.8 L281.5 384.0 L283.1 382.4 L285.0 380.9 L287.3 379.6 L290.2 378.6 L294.0 378.2 L304.0 381.0 L304.0 381.0 L311.9 387.7 L313.6 391.2 L314.4 394.1 L314.6 396.7 L314.5 399.2 L314.0 401.4 L313.3 403.6 L312.4 405.6 L311.3 407.5 L310.0 409.4 L308.6 411.1 L307.1 412.8 L305.4 414.4 L303.5 415.9 L301.5 417.4 L299.4 418.8 L297.1 420.0 L294.6 421.2 L291.9 422.3 L289.0 423.2 L285.6 424.0 L281.0 424.0Z" fill="none" stroke="#f0645c" stroke-width="0.9"/><path d="M281.0 424.0 L304.0 381.0" stroke="#f0645c" stroke-width="0.9"/><path d="M244.4 427.0 L242.0 429.1 L239.9 430.3 L237.8 431.3 L235.9 432.0 L234.0 432.5 L232.1 433.0 L230.2 433.3 L228.4 433.5 L226.7 433.6 L224.9 433.6 L223.2 433.4 L221.6 433.2 L219.9 432.9 L218.3 432.4 L216.8 431.8 L215.3 431.0 L213.8 430.1 L212.5 429.0 L211.2 427.5 L210.0 425.7 L209.1 423.1 L209.6 416.0 L209.6 416.0 L213.3 409.9 L215.5 408.3 L217.5 407.5 L219.4 407.0 L221.2 406.9 L222.9 407.0 L224.6 407.2 L226.2 407.6 L227.7 408.1 L229.3 408.8 L230.8 409.6 L232.2 410.4 L233.7 411.4 L235.1 412.5 L236.4 413.7 L237.7 415.0 L239.0 416.5 L240.3 418.0 L241.5 419.7 L242.6 421.7 L243.7 423.9 L244.4 427.0Z" fill="#5f7d52"/><path d="M244.4 427.0 L243.7 423.9 L242.6 421.7 L241.5 419.7 L240.3 418.0 L239.0 416.5 L237.7 415.0 L236.4 413.7 L235.1 412.5 L233.7 411.4 L232.2 410.4 L230.8 409.6 L229.3 408.8 L227.7 408.1 L226.2 407.6 L224.6 407.2 L222.9 407.0 L221.2 406.9 L219.4 407.0 L217.5 407.5 L215.5 408.3 L213.3 409.9 L209.6 416.0Z" fill="#82ab6f"/><path d="M244.4 427.0 L242.0 429.1 L239.9 430.3 L237.8 431.3 L235.9 432.0 L234.0 432.5 L232.1 433.0 L230.2 433.3 L228.4 433.5 L226.7 433.6 L224.9 433.6 L223.2 433.4 L221.6 433.2 L219.9 432.9 L218.3 432.4 L216.8 431.8 L215.3 431.0 L213.8 430.1 L212.5 429.0 L211.2 427.5 L210.0 425.7 L209.1 423.1 L209.6 416.0 L209.6 416.0 L213.3 409.9 L215.5 408.3 L217.5 407.5 L219.4 407.0 L221.2 406.9 L222.9 407.0 L224.6 407.2 L226.2 407.6 L227.7 408.1 L229.3 408.8 L230.8 409.6 L232.2 410.4 L233.7 411.4 L235.1 412.5 L236.4 413.7 L237.7 415.0 L239.0 416.5 L240.3 418.0 L241.5 419.7 L242.6 421.7 L243.7 423.9 L244.4 427.0Z" fill="none" stroke="#f0645c" stroke-width="0.9"/><path d="M244.4 427.0 L209.6 416.0" stroke="#f0645c" stroke-width="0.9"/><path d="M244.4 427.0 L241.4 427.4 L239.2 427.2 L237.2 426.8 L235.3 426.3 L233.6 425.7 L232.0 425.1 L230.4 424.3 L228.9 423.6 L227.6 422.7 L226.3 421.8 L225.0 420.8 L223.9 419.8 L222.9 418.6 L221.9 417.5 L221.1 416.2 L220.3 414.8 L219.7 413.4 L219.3 411.8 L219.1 410.0 L219.2 408.0 L219.9 405.6 L224.0 400.5 L224.0 400.5 L230.0 397.8 L232.5 397.8 L234.5 398.2 L236.1 398.9 L237.5 399.7 L238.8 400.6 L239.9 401.7 L240.9 402.8 L241.8 404.0 L242.6 405.3 L243.4 406.7 L244.0 408.1 L244.5 409.6 L245.0 411.2 L245.4 412.8 L245.7 414.5 L245.9 416.2 L246.0 418.1 L246.0 420.0 L245.9 422.0 L245.5 424.2 L244.4 427.0Z" fill="#5f7d52"/><path d="M244.4 427.0 L245.5 424.2 L245.9 422.0 L246.0 420.0 L246.0 418.1 L245.9 416.2 L245.7 414.5 L245.4 412.8 L245.0 411.2 L244.5 409.6 L244.0 408.1 L243.4 406.7 L242.6 405.3 L241.8 404.0 L240.9 402.8 L239.9 401.7 L238.8 400.6 L237.5 399.7 L236.1 398.9 L234.5 398.2 L232.5 397.8 L230.0 397.8 L224.0 400.5Z" fill="#82ab6f"/><path d="M244.4 427.0 L241.4 427.4 L239.2 427.2 L237.2 426.8 L235.3 426.3 L233.6 425.7 L232.0 425.1 L230.4 424.3 L228.9 423.6 L227.6 422.7 L226.3 421.8 L225.0 420.8 L223.9 419.8 L222.9 418.6 L221.9 417.5 L221.1 416.2 L220.3 414.8 L219.7 413.4 L219.3 411.8 L219.1 410.0 L219.2 408.0 L219.9 405.6 L224.0 400.5 L224.0 400.5 L230.0 397.8 L232.5 397.8 L234.5 398.2 L236.1 398.9 L237.5 399.7 L238.8 400.6 L239.9 401.7 L240.9 402.8 L241.8 404.0 L242.6 405.3 L243.4 406.7 L244.0 408.1 L244.5 409.6 L245.0 411.2 L245.4 412.8 L245.7 414.5 L245.9 416.2 L246.0 418.1 L246.0 420.0 L245.9 422.0 L245.5 424.2 L244.4 427.0Z" fill="none" stroke="#f0645c" stroke-width="0.9"/><path d="M244.4 427.0 L224.0 400.5" stroke="#f0645c" stroke-width="0.9"/><path d="M256.0 472.0 L253.0 474.4 L250.4 475.7 L248.1 476.6 L245.8 477.3 L243.6 477.8 L241.5 478.2 L239.4 478.4 L237.4 478.5 L235.5 478.5 L233.6 478.4 L231.7 478.1 L230.0 477.7 L228.2 477.1 L226.6 476.4 L225.0 475.6 L223.5 474.6 L222.1 473.3 L220.8 471.8 L219.7 470.0 L218.7 467.7 L218.2 464.5 L220.0 456.0 L220.0 456.0 L225.1 449.0 L227.8 447.2 L230.2 446.4 L232.3 446.0 L234.3 446.0 L236.1 446.2 L237.9 446.6 L239.6 447.2 L241.2 448.0 L242.8 448.9 L244.3 449.9 L245.7 451.1 L247.1 452.4 L248.4 453.8 L249.7 455.4 L250.9 457.1 L252.0 458.9 L253.1 460.9 L254.1 463.0 L255.0 465.4 L255.7 468.2 L256.0 472.0Z" fill="#5f7d52"/><path d="M256.0 472.0 L255.7 468.2 L255.0 465.4 L254.1 463.0 L253.1 460.9 L252.0 458.9 L250.9 457.1 L249.7 455.4 L248.4 453.8 L247.1 452.4 L245.7 451.1 L244.3 449.9 L242.8 448.9 L241.2 448.0 L239.6 447.2 L237.9 446.6 L236.1 446.2 L234.3 446.0 L232.3 446.0 L230.2 446.4 L227.8 447.2 L225.1 449.0 L220.0 456.0Z" fill="#82ab6f"/><path d="M256.0 472.0 L253.0 474.4 L250.4 475.7 L248.1 476.6 L245.8 477.3 L243.6 477.8 L241.5 478.2 L239.4 478.4 L237.4 478.5 L235.5 478.5 L233.6 478.4 L231.7 478.1 L230.0 477.7 L228.2 477.1 L226.6 476.4 L225.0 475.6 L223.5 474.6 L222.1 473.3 L220.8 471.8 L219.7 470.0 L218.7 467.7 L218.2 464.5 L220.0 456.0 L220.0 456.0 L225.1 449.0 L227.8 447.2 L230.2 446.4 L232.3 446.0 L234.3 446.0 L236.1 446.2 L237.9 446.6 L239.6 447.2 L241.2 448.0 L242.8 448.9 L244.3 449.9 L245.7 451.1 L247.1 452.4 L248.4 453.8 L249.7 455.4 L250.9 457.1 L252.0 458.9 L253.1 460.9 L254.1 463.0 L255.0 465.4 L255.7 468.2 L256.0 472.0Z" fill="none" stroke="#f0645c" stroke-width="0.9"/><path d="M256.0 472.0 L220.0 456.0" stroke="#f0645c" stroke-width="0.9"/><path d="M270.0 450.0 L270.6 447.7 L271.4 446.1 L272.3 444.6 L273.2 443.4 L274.1 442.2 L275.1 441.1 L276.1 440.2 L277.2 439.3 L278.2 438.4 L279.3 437.7 L280.5 437.0 L281.6 436.5 L282.8 436.0 L284.0 435.5 L285.2 435.2 L286.5 435.0 L287.8 435.0 L289.1 435.1 L290.5 435.3 L292.1 435.9 L293.8 437.1 L296.5 441.5 L296.5 441.5 L296.8 446.7 L296.1 448.6 L295.2 450.0 L294.2 451.0 L293.2 451.9 L292.1 452.6 L290.9 453.2 L289.8 453.6 L288.6 454.0 L287.3 454.3 L286.0 454.5 L284.8 454.6 L283.4 454.6 L282.1 454.6 L280.7 454.4 L279.3 454.2 L277.9 453.9 L276.5 453.5 L275.0 453.0 L273.4 452.4 L271.8 451.5 L270.0 450.0Z" fill="#5f7d52"/><path d="M270.0 450.0 L270.6 447.7 L271.4 446.1 L272.3 444.6 L273.2 443.4 L274.1 442.2 L275.1 441.1 L276.1 440.2 L277.2 439.3 L278.2 438.4 L279.3 437.7 L280.5 437.0 L281.6 436.5 L282.8 436.0 L284.0 435.5 L285.2 435.2 L286.5 435.0 L287.8 435.0 L289.1 435.1 L290.5 435.3 L292.1 435.9 L293.8 437.1 L296.5 441.5Z" fill="#82ab6f"/><path d="M270.0 450.0 L270.6 447.7 L271.4 446.1 L272.3 444.6 L273.2 443.4 L274.1 442.2 L275.1 441.1 L276.1 440.2 L277.2 439.3 L278.2 438.4 L279.3 437.7 L280.5 437.0 L281.6 436.5 L282.8 436.0 L284.0 435.5 L285.2 435.2 L286.5 435.0 L287.8 435.0 L289.1 435.1 L290.5 435.3 L292.1 435.9 L293.8 437.1 L296.5 441.5 L296.5 441.5 L296.8 446.7 L296.1 448.6 L295.2 450.0 L294.2 451.0 L293.2 451.9 L292.1 452.6 L290.9 453.2 L289.8 453.6 L288.6 454.0 L287.3 454.3 L286.0 454.5 L284.8 454.6 L283.4 454.6 L282.1 454.6 L280.7 454.4 L279.3 454.2 L277.9 453.9 L276.5 453.5 L275.0 453.0 L273.4 452.4 L271.8 451.5 L270.0 450.0Z" fill="none" stroke="#f0645c" stroke-width="0.9"/><path d="M270.0 450.0 L296.5 441.5" stroke="#f0645c" stroke-width="0.9"/><path d="M260.0 496.0 L260.1 491.9 L260.8 488.9 L261.6 486.3 L262.6 484.0 L263.7 481.8 L264.9 479.8 L266.1 478.0 L267.4 476.2 L268.8 474.6 L270.2 473.2 L271.7 471.9 L273.2 470.7 L274.9 469.6 L276.6 468.7 L278.4 468.0 L280.3 467.4 L282.2 467.1 L284.4 467.0 L286.7 467.3 L289.2 468.1 L292.2 469.8 L298.0 477.0 L298.0 477.0 L300.3 485.9 L299.9 489.4 L299.0 491.9 L297.8 493.9 L296.5 495.5 L295.0 496.9 L293.4 498.1 L291.8 499.1 L290.0 499.9 L288.2 500.6 L286.3 501.1 L284.4 501.5 L282.3 501.8 L280.2 501.9 L278.1 501.9 L275.9 501.8 L273.6 501.5 L271.2 501.1 L268.7 500.5 L266.1 499.6 L263.3 498.4 L260.0 496.0Z" fill="#5f7d52"/><path d="M260.0 496.0 L260.1 491.9 L260.8 488.9 L261.6 486.3 L262.6 484.0 L263.7 481.8 L264.9 479.8 L266.1 478.0 L267.4 476.2 L268.8 474.6 L270.2 473.2 L271.7 471.9 L273.2 470.7 L274.9 469.6 L276.6 468.7 L278.4 468.0 L280.3 467.4 L282.2 467.1 L284.4 467.0 L286.7 467.3 L289.2 468.1 L292.2 469.8 L298.0 477.0Z" fill="#82ab6f"/><path d="M260.0 496.0 L260.1 491.9 L260.8 488.9 L261.6 486.3 L262.6 484.0 L263.7 481.8 L264.9 479.8 L266.1 478.0 L267.4 476.2 L268.8 474.6 L270.2 473.2 L271.7 471.9 L273.2 470.7 L274.9 469.6 L276.6 468.7 L278.4 468.0 L280.3 467.4 L282.2 467.1 L284.4 467.0 L286.7 467.3 L289.2 468.1 L292.2 469.8 L298.0 477.0 L298.0 477.0 L300.3 485.9 L299.9 489.4 L299.0 491.9 L297.8 493.9 L296.5 495.5 L295.0 496.9 L293.4 498.1 L291.8 499.1 L290.0 499.9 L288.2 500.6 L286.3 501.1 L284.4 501.5 L282.3 501.8 L280.2 501.9 L278.1 501.9 L275.9 501.8 L273.6 501.5 L271.2 501.1 L268.7 500.5 L266.1 499.6 L263.3 498.4 L260.0 496.0Z" fill="none" stroke="#f0645c" stroke-width="0.9"/><path d="M260.0 496.0 L298.0 477.0" stroke="#f0645c" stroke-width="0.9"/><clipPath id="rp2071"><path d="M207.2 506 L310.6 506 L310.6 598.4 Q310.6 609.4 299.6 609.4 L218.2 609.4 Q207.2 609.4 207.2 598.4 Z"/></clipPath><g clip-path="url(#rp2071)"><rect x="207.2" y="506" width="103.40000000000003" height="103.39999999999998" fill="#f4994b"/><rect x="258.7" y="506" width="51.900000000000034" height="103.39999999999998" fill="#df9152"/><rect x="207.2" y="540.6" width="51.5" height="25.799999999999955" fill="#fde3b9"/><rect x="258.7" y="540.6" width="51.900000000000034" height="25.799999999999955" fill="#e4d3b1"/></g><path d="M207.2 506 L310.6 506 L310.6 598.4 Q310.6 609.4 299.6 609.4 L218.2 609.4 Q207.2 609.4 207.2 598.4 Z" fill="none" stroke="#f0645c" stroke-width="0.9"/><path d="M258.7 506 L258.7 609.4 M207.2 540.6 L310.6 540.6 M207.2 566.4 L310.6 566.4" stroke="#f0645c" stroke-width="0.9"/><path d="M434 501 C434 480 430 455 441 414" fill="none" stroke="#f0645c" stroke-width="5.800000000000001" stroke-linecap="butt"/><path d="M434 501 C434 480 430 455 441 414" fill="none" stroke="#82ab6f" stroke-width="4.2" stroke-linecap="butt"/><path d="M437 501 C440 475 445 440 458.7 416.6" fill="none" stroke="#f0645c" stroke-width="5.800000000000001" stroke-linecap="butt"/><path d="M437 501 C440 475 445 440 458.7 416.6" fill="none" stroke="#82ab6f" stroke-width="4.2" stroke-linecap="butt"/><path d="M432 480 C430 460 428 440 420 423" fill="none" stroke="#f0645c" stroke-width="5.2" stroke-linecap="butt"/><path d="M432 480 C430 460 428 440 420 423" fill="none" stroke="#82ab6f" stroke-width="3.6" stroke-linecap="butt"/><path d="M420 510 C415 495 405 480 395.5 465" fill="none" stroke="#f0645c" stroke-width="5.2" stroke-linecap="butt"/><path d="M420 510 C415 495 405 480 395.5 465" fill="none" stroke="#82ab6f" stroke-width="3.6" stroke-linecap="butt"/><path d="M455 504 C455 480 452 460 440 445" fill="none" stroke="#f0645c" stroke-width="5.6" stroke-linecap="butt"/><path d="M455 504 C455 480 452 460 440 445" fill="none" stroke="#82ab6f" stroke-width="4" stroke-linecap="butt"/><path d="M441.0 414.0 L437.2 412.9 L434.6 411.5 L432.4 410.1 L430.5 408.7 L428.8 407.2 L427.3 405.7 L426.0 404.2 L424.8 402.7 L423.7 401.1 L422.8 399.5 L422.1 397.9 L421.4 396.3 L421.0 394.6 L420.7 393.0 L420.6 391.3 L420.7 389.5 L421.0 387.7 L421.6 385.9 L422.7 384.1 L424.2 382.1 L426.8 380.0 L435.5 377.0 L435.5 377.0 L444.7 377.4 L447.8 378.6 L449.8 380.0 L451.4 381.5 L452.5 383.1 L453.3 384.7 L453.9 386.3 L454.3 388.0 L454.5 389.6 L454.6 391.4 L454.4 393.1 L454.2 394.9 L453.8 396.6 L453.2 398.4 L452.5 400.3 L451.7 402.1 L450.7 404.0 L449.5 405.9 L448.1 407.8 L446.4 409.8 L444.3 411.8 L441.0 414.0Z" fill="#5f7d52"/><path d="M441.0 414.0 L444.3 411.8 L446.4 409.8 L448.1 407.8 L449.5 405.9 L450.7 404.0 L451.7 402.1 L452.5 400.3 L453.2 398.4 L453.8 396.6 L454.2 394.9 L454.4 393.1 L454.6 391.4 L454.5 389.6 L454.3 388.0 L453.9 386.3 L453.3 384.7 L452.5 383.1 L451.4 381.5 L449.8 380.0 L447.8 378.6 L444.7 377.4 L435.5 377.0Z" fill="#82ab6f"/><path d="M441.0 414.0 L437.2 412.9 L434.6 411.5 L432.4 410.1 L430.5 408.7 L428.8 407.2 L427.3 405.7 L426.0 404.2 L424.8 402.7 L423.7 401.1 L422.8 399.5 L422.1 397.9 L421.4 396.3 L421.0 394.6 L420.7 393.0 L420.6 391.3 L420.7 389.5 L421.0 387.7 L421.6 385.9 L422.7 384.1 L424.2 382.1 L426.8 380.0 L435.5 377.0 L435.5 377.0 L444.7 377.4 L447.8 378.6 L449.8 380.0 L451.4 381.5 L452.5 383.1 L453.3 384.7 L453.9 386.3 L454.3 388.0 L454.5 389.6 L454.6 391.4 L454.4 393.1 L454.2 394.9 L453.8 396.6 L453.2 398.4 L452.5 400.3 L451.7 402.1 L450.7 404.0 L449.5 405.9 L448.1 407.8 L446.4 409.8 L444.3 411.8 L441.0 414.0Z" fill="none" stroke="#f0645c" stroke-width="0.9"/><path d="M441.0 414.0 L435.5 377.0" stroke="#f0645c" stroke-width="0.9"/><path d="M458.7 416.6 L458.5 412.4 L459.0 409.2 L459.7 406.3 L460.6 403.7 L461.6 401.2 L462.7 398.9 L463.9 396.8 L465.2 394.7 L466.6 392.8 L468.1 391.0 L469.6 389.3 L471.2 387.7 L472.9 386.3 L474.7 385.0 L476.7 383.9 L478.7 382.9 L480.9 382.1 L483.2 381.6 L485.7 381.4 L488.6 381.7 L492.1 382.8 L499.0 389.0 L499.0 389.0 L502.3 397.7 L502.1 401.3 L501.3 404.1 L500.2 406.4 L498.8 408.4 L497.3 410.1 L495.7 411.7 L493.9 413.1 L492.1 414.3 L490.1 415.4 L488.1 416.3 L486.0 417.1 L483.8 417.8 L481.5 418.4 L479.1 418.9 L476.6 419.2 L474.1 419.4 L471.4 419.5 L468.7 419.4 L465.7 419.0 L462.6 418.3 L458.7 416.6Z" fill="#5f7d52"/><path d="M458.7 416.6 L458.5 412.4 L459.0 409.2 L459.7 406.3 L460.6 403.7 L461.6 401.2 L462.7 398.9 L463.9 396.8 L465.2 394.7 L466.6 392.8 L468.1 391.0 L469.6 389.3 L471.2 387.7 L472.9 386.3 L474.7 385.0 L476.7 383.9 L478.7 382.9 L480.9 382.1 L483.2 381.6 L485.7 381.4 L488.6 381.7 L492.1 382.8 L499.0 389.0Z" fill="#82ab6f"/><path d="M458.7 416.6 L458.5 412.4 L459.0 409.2 L459.7 406.3 L460.6 403.7 L461.6 401.2 L462.7 398.9 L463.9 396.8 L465.2 394.7 L466.6 392.8 L468.1 391.0 L469.6 389.3 L471.2 387.7 L472.9 386.3 L474.7 385.0 L476.7 383.9 L478.7 382.9 L480.9 382.1 L483.2 381.6 L485.7 381.4 L488.6 381.7 L492.1 382.8 L499.0 389.0 L499.0 389.0 L502.3 397.7 L502.1 401.3 L501.3 404.1 L500.2 406.4 L498.8 408.4 L497.3 410.1 L495.7 411.7 L493.9 413.1 L492.1 414.3 L490.1 415.4 L488.1 416.3 L486.0 417.1 L483.8 417.8 L481.5 418.4 L479.1 418.9 L476.6 419.2 L474.1 419.4 L471.4 419.5 L468.7 419.4 L465.7 419.0 L462.6 418.3 L458.7 416.6Z" fill="none" stroke="#f0645c" stroke-width="0.9"/><path d="M458.7 416.6 L499.0 389.0" stroke="#f0645c" stroke-width="0.9"/><path d="M456.5 454.3 L456.9 449.9 L457.9 446.7 L459.1 443.9 L460.4 441.4 L461.8 439.1 L463.2 436.9 L464.8 434.9 L466.4 433.1 L468.0 431.4 L469.8 429.8 L471.6 428.4 L473.4 427.1 L475.3 426.0 L477.4 425.0 L479.4 424.2 L481.6 423.6 L483.9 423.3 L486.3 423.2 L488.9 423.5 L491.7 424.4 L495.0 426.2 L501.0 434.0 L501.0 434.0 L502.9 443.6 L502.2 447.3 L501.0 450.0 L499.5 452.2 L497.9 453.9 L496.1 455.4 L494.2 456.7 L492.3 457.8 L490.2 458.6 L488.1 459.4 L485.9 459.9 L483.7 460.3 L481.4 460.6 L479.0 460.8 L476.6 460.8 L474.0 460.6 L471.5 460.3 L468.8 459.8 L466.0 459.1 L463.2 458.2 L460.1 456.9 L456.5 454.3Z" fill="#5f7d52"/><path d="M456.5 454.3 L456.9 449.9 L457.9 446.7 L459.1 443.9 L460.4 441.4 L461.8 439.1 L463.2 436.9 L464.8 434.9 L466.4 433.1 L468.0 431.4 L469.8 429.8 L471.6 428.4 L473.4 427.1 L475.3 426.0 L477.4 425.0 L479.4 424.2 L481.6 423.6 L483.9 423.3 L486.3 423.2 L488.9 423.5 L491.7 424.4 L495.0 426.2 L501.0 434.0Z" fill="#82ab6f"/><path d="M456.5 454.3 L456.9 449.9 L457.9 446.7 L459.1 443.9 L460.4 441.4 L461.8 439.1 L463.2 436.9 L464.8 434.9 L466.4 433.1 L468.0 431.4 L469.8 429.8 L471.6 428.4 L473.4 427.1 L475.3 426.0 L477.4 425.0 L479.4 424.2 L481.6 423.6 L483.9 423.3 L486.3 423.2 L488.9 423.5 L491.7 424.4 L495.0 426.2 L501.0 434.0 L501.0 434.0 L502.9 443.6 L502.2 447.3 L501.0 450.0 L499.5 452.2 L497.9 453.9 L496.1 455.4 L494.2 456.7 L492.3 457.8 L490.2 458.6 L488.1 459.4 L485.9 459.9 L483.7 460.3 L481.4 460.6 L479.0 460.8 L476.6 460.8 L474.0 460.6 L471.5 460.3 L468.8 459.8 L466.0 459.1 L463.2 458.2 L460.1 456.9 L456.5 454.3Z" fill="none" stroke="#f0645c" stroke-width="0.9"/><path d="M456.5 454.3 L501.0 434.0" stroke="#f0645c" stroke-width="0.9"/><path d="M421.0 422.0 L419.0 424.5 L417.2 426.0 L415.3 427.2 L413.5 428.3 L411.7 429.1 L409.9 429.9 L408.2 430.5 L406.4 431.0 L404.7 431.5 L402.9 431.8 L401.2 432.0 L399.5 432.1 L397.8 432.0 L396.1 431.9 L394.4 431.6 L392.8 431.2 L391.2 430.5 L389.5 429.7 L388.0 428.6 L386.4 427.1 L385.0 424.8 L384.0 418.0 L384.0 418.0 L386.4 411.6 L388.3 409.7 L390.1 408.5 L391.9 407.7 L393.7 407.3 L395.4 407.0 L397.1 407.0 L398.8 407.0 L400.5 407.2 L402.1 407.6 L403.8 408.0 L405.4 408.6 L407.1 409.3 L408.7 410.0 L410.3 410.9 L411.9 411.9 L413.5 413.0 L415.0 414.3 L416.6 415.7 L418.1 417.3 L419.6 419.2 L421.0 422.0Z" fill="#5f7d52"/><path d="M421.0 422.0 L419.6 419.2 L418.1 417.3 L416.6 415.7 L415.0 414.3 L413.5 413.0 L411.9 411.9 L410.3 410.9 L408.7 410.0 L407.1 409.3 L405.4 408.6 L403.8 408.0 L402.1 407.6 L400.5 407.2 L398.8 407.0 L397.1 407.0 L395.4 407.0 L393.7 407.3 L391.9 407.7 L390.1 408.5 L388.3 409.7 L386.4 411.6 L384.0 418.0Z" fill="#82ab6f"/><path d="M421.0 422.0 L419.0 424.5 L417.2 426.0 L415.3 427.2 L413.5 428.3 L411.7 429.1 L409.9 429.9 L408.2 430.5 L406.4 431.0 L404.7 431.5 L402.9 431.8 L401.2 432.0 L399.5 432.1 L397.8 432.0 L396.1 431.9 L394.4 431.6 L392.8 431.2 L391.2 430.5 L389.5 429.7 L388.0 428.6 L386.4 427.1 L385.0 424.8 L384.0 418.0 L384.0 418.0 L386.4 411.6 L388.3 409.7 L390.1 408.5 L391.9 407.7 L393.7 407.3 L395.4 407.0 L397.1 407.0 L398.8 407.0 L400.5 407.2 L402.1 407.6 L403.8 408.0 L405.4 408.6 L407.1 409.3 L408.7 410.0 L410.3 410.9 L411.9 411.9 L413.5 413.0 L415.0 414.3 L416.6 415.7 L418.1 417.3 L419.6 419.2 L421.0 422.0Z" fill="none" stroke="#f0645c" stroke-width="0.9"/><path d="M421.0 422.0 L384.0 418.0" stroke="#f0645c" stroke-width="0.9"/><path d="M421.5 422.0 L418.6 422.4 L416.4 422.3 L414.4 421.9 L412.6 421.5 L410.9 421.0 L409.3 420.4 L407.8 419.7 L406.4 418.9 L405.0 418.1 L403.8 417.3 L402.6 416.3 L401.5 415.3 L400.5 414.3 L399.6 413.1 L398.8 411.9 L398.1 410.6 L397.5 409.2 L397.1 407.7 L397.0 406.0 L397.1 404.0 L397.8 401.6 L402.0 396.6 L402.0 396.6 L407.9 393.9 L410.4 393.8 L412.4 394.2 L414.0 394.8 L415.3 395.5 L416.6 396.4 L417.6 397.4 L418.6 398.5 L419.5 399.7 L420.2 401.0 L420.9 402.3 L421.5 403.6 L422.0 405.1 L422.5 406.6 L422.8 408.2 L423.1 409.8 L423.2 411.5 L423.3 413.3 L423.3 415.1 L423.1 417.1 L422.6 419.3 L421.5 422.0Z" fill="#5f7d52"/><path d="M421.5 422.0 L422.6 419.3 L423.1 417.1 L423.3 415.1 L423.3 413.3 L423.2 411.5 L423.1 409.8 L422.8 408.2 L422.5 406.6 L422.0 405.1 L421.5 403.6 L420.9 402.3 L420.2 401.0 L419.5 399.7 L418.6 398.5 L417.6 397.4 L416.6 396.4 L415.3 395.5 L414.0 394.8 L412.4 394.2 L410.4 393.8 L407.9 393.9 L402.0 396.6Z" fill="#82ab6f"/><path d="M421.5 422.0 L418.6 422.4 L416.4 422.3 L414.4 421.9 L412.6 421.5 L410.9 421.0 L409.3 420.4 L407.8 419.7 L406.4 418.9 L405.0 418.1 L403.8 417.3 L402.6 416.3 L401.5 415.3 L400.5 414.3 L399.6 413.1 L398.8 411.9 L398.1 410.6 L397.5 409.2 L397.1 407.7 L397.0 406.0 L397.1 404.0 L397.8 401.6 L402.0 396.6 L402.0 396.6 L407.9 393.9 L410.4 393.8 L412.4 394.2 L414.0 394.8 L415.3 395.5 L416.6 396.4 L417.6 397.4 L418.6 398.5 L419.5 399.7 L420.2 401.0 L420.9 402.3 L421.5 403.6 L422.0 405.1 L422.5 406.6 L422.8 408.2 L423.1 409.8 L423.2 411.5 L423.3 413.3 L423.3 415.1 L423.1 417.1 L422.6 419.3 L421.5 422.0Z" fill="none" stroke="#f0645c" stroke-width="0.9"/><path d="M421.5 422.0 L402.0 396.6" stroke="#f0645c" stroke-width="0.9"/><path d="M442.0 444.0 L440.2 444.3 L438.7 444.3 L437.5 444.1 L436.3 443.9 L435.2 443.6 L434.1 443.2 L433.1 442.8 L432.1 442.4 L431.2 441.9 L430.4 441.3 L429.6 440.8 L428.8 440.1 L428.1 439.5 L427.4 438.8 L426.9 438.0 L426.3 437.2 L425.9 436.3 L425.6 435.3 L425.3 434.2 L425.3 432.9 L425.6 431.4 L428.0 428.0 L428.0 428.0 L431.6 426.1 L433.2 426.0 L434.5 426.2 L435.5 426.5 L436.5 427.0 L437.3 427.6 L438.1 428.2 L438.7 428.9 L439.4 429.6 L439.9 430.4 L440.4 431.2 L440.9 432.1 L441.3 433.0 L441.7 434.0 L442.0 435.0 L442.3 436.1 L442.5 437.2 L442.6 438.3 L442.7 439.5 L442.7 440.8 L442.6 442.2 L442.0 444.0Z" fill="#5f7d52"/><path d="M442.0 444.0 L442.6 442.2 L442.7 440.8 L442.7 439.5 L442.6 438.3 L442.5 437.2 L442.3 436.1 L442.0 435.0 L441.7 434.0 L441.3 433.0 L440.9 432.1 L440.4 431.2 L439.9 430.4 L439.4 429.6 L438.7 428.9 L438.1 428.2 L437.3 427.6 L436.5 427.0 L435.5 426.5 L434.5 426.2 L433.2 426.0 L431.6 426.1 L428.0 428.0Z" fill="#82ab6f"/><path d="M442.0 444.0 L440.2 444.3 L438.7 444.3 L437.5 444.1 L436.3 443.9 L435.2 443.6 L434.1 443.2 L433.1 442.8 L432.1 442.4 L431.2 441.9 L430.4 441.3 L429.6 440.8 L428.8 440.1 L428.1 439.5 L427.4 438.8 L426.9 438.0 L426.3 437.2 L425.9 436.3 L425.6 435.3 L425.3 434.2 L425.3 432.9 L425.6 431.4 L428.0 428.0 L428.0 428.0 L431.6 426.1 L433.2 426.0 L434.5 426.2 L435.5 426.5 L436.5 427.0 L437.3 427.6 L438.1 428.2 L438.7 428.9 L439.4 429.6 L439.9 430.4 L440.4 431.2 L440.9 432.1 L441.3 433.0 L441.7 434.0 L442.0 435.0 L442.3 436.1 L442.5 437.2 L442.6 438.3 L442.7 439.5 L442.7 440.8 L442.6 442.2 L442.0 444.0Z" fill="none" stroke="#f0645c" stroke-width="0.9"/><path d="M442.0 444.0 L428.0 428.0" stroke="#f0645c" stroke-width="0.9"/><path d="M395.5 465.4 L392.2 466.4 L389.7 466.6 L387.4 466.5 L385.3 466.4 L383.3 466.1 L381.4 465.6 L379.6 465.1 L377.9 464.5 L376.2 463.9 L374.7 463.1 L373.2 462.3 L371.9 461.3 L370.6 460.3 L369.4 459.2 L368.3 457.9 L367.4 456.6 L366.5 455.1 L365.9 453.4 L365.5 451.5 L365.4 449.3 L365.9 446.4 L370.0 440.0 L370.0 440.0 L376.4 435.9 L379.2 435.4 L381.5 435.4 L383.4 435.9 L385.0 436.5 L386.5 437.3 L387.9 438.2 L389.1 439.3 L390.3 440.5 L391.3 441.8 L392.3 443.1 L393.1 444.6 L393.9 446.2 L394.6 447.8 L395.2 449.5 L395.7 451.3 L396.1 453.2 L396.4 455.2 L396.6 457.3 L396.6 459.6 L396.4 462.1 L395.5 465.4Z" fill="#5f7d52"/><path d="M395.5 465.4 L396.4 462.1 L396.6 459.6 L396.6 457.3 L396.4 455.2 L396.1 453.2 L395.7 451.3 L395.2 449.5 L394.6 447.8 L393.9 446.2 L393.1 444.6 L392.3 443.1 L391.3 441.8 L390.3 440.5 L389.1 439.3 L387.9 438.2 L386.5 437.3 L385.0 436.5 L383.4 435.9 L381.5 435.4 L379.2 435.4 L376.4 435.9 L370.0 440.0Z" fill="#82ab6f"/><path d="M395.5 465.4 L392.2 466.4 L389.7 466.6 L387.4 466.5 L385.3 466.4 L383.3 466.1 L381.4 465.6 L379.6 465.1 L377.9 464.5 L376.2 463.9 L374.7 463.1 L373.2 462.3 L371.9 461.3 L370.6 460.3 L369.4 459.2 L368.3 457.9 L367.4 456.6 L366.5 455.1 L365.9 453.4 L365.5 451.5 L365.4 449.3 L365.9 446.4 L370.0 440.0 L370.0 440.0 L376.4 435.9 L379.2 435.4 L381.5 435.4 L383.4 435.9 L385.0 436.5 L386.5 437.3 L387.9 438.2 L389.1 439.3 L390.3 440.5 L391.3 441.8 L392.3 443.1 L393.1 444.6 L393.9 446.2 L394.6 447.8 L395.2 449.5 L395.7 451.3 L396.1 453.2 L396.4 455.2 L396.6 457.3 L396.6 459.6 L396.4 462.1 L395.5 465.4Z" fill="none" stroke="#f0645c" stroke-width="0.9"/><path d="M395.5 465.4 L370.0 440.0" stroke="#f0645c" stroke-width="0.9"/><path d="M433.0 472.0 L429.7 474.1 L427.0 475.2 L424.5 475.9 L422.1 476.4 L419.8 476.7 L417.7 476.8 L415.6 476.9 L413.6 476.7 L411.6 476.5 L409.7 476.2 L407.9 475.7 L406.2 475.1 L404.6 474.4 L403.0 473.5 L401.5 472.5 L400.2 471.3 L398.9 469.9 L397.8 468.2 L396.9 466.2 L396.2 463.8 L396.1 460.5 L399.0 452.0 L399.0 452.0 L405.0 445.3 L407.9 443.9 L410.4 443.2 L412.6 443.1 L414.6 443.2 L416.4 443.6 L418.1 444.3 L419.7 445.1 L421.3 446.0 L422.7 447.1 L424.1 448.3 L425.3 449.7 L426.6 451.1 L427.7 452.7 L428.8 454.4 L429.8 456.3 L430.7 458.2 L431.5 460.4 L432.3 462.7 L432.8 465.2 L433.2 468.1 L433.0 472.0Z" fill="#5f7d52"/><path d="M433.0 472.0 L433.2 468.1 L432.8 465.2 L432.3 462.7 L431.5 460.4 L430.7 458.2 L429.8 456.3 L428.8 454.4 L427.7 452.7 L426.6 451.1 L425.3 449.7 L424.1 448.3 L422.7 447.1 L421.3 446.0 L419.7 445.1 L418.1 444.3 L416.4 443.6 L414.6 443.2 L412.6 443.1 L410.4 443.2 L407.9 443.9 L405.0 445.3 L399.0 452.0Z" fill="#82ab6f"/><path d="M433.0 472.0 L429.7 474.1 L427.0 475.2 L424.5 475.9 L422.1 476.4 L419.8 476.7 L417.7 476.8 L415.6 476.9 L413.6 476.7 L411.6 476.5 L409.7 476.2 L407.9 475.7 L406.2 475.1 L404.6 474.4 L403.0 473.5 L401.5 472.5 L400.2 471.3 L398.9 469.9 L397.8 468.2 L396.9 466.2 L396.2 463.8 L396.1 460.5 L399.0 452.0 L399.0 452.0 L405.0 445.3 L407.9 443.9 L410.4 443.2 L412.6 443.1 L414.6 443.2 L416.4 443.6 L418.1 444.3 L419.7 445.1 L421.3 446.0 L422.7 447.1 L424.1 448.3 L425.3 449.7 L426.6 451.1 L427.7 452.7 L428.8 454.4 L429.8 456.3 L430.7 458.2 L431.5 460.4 L432.3 462.7 L432.8 465.2 L433.2 468.1 L433.0 472.0Z" fill="none" stroke="#f0645c" stroke-width="0.9"/><path d="M433.0 472.0 L399.0 452.0" stroke="#f0645c" stroke-width="0.9"/><path d="M406.6 481.0 L406.2 484.0 L405.5 486.1 L404.7 487.9 L403.8 489.6 L402.9 491.1 L401.9 492.5 L400.9 493.7 L399.8 494.9 L398.7 495.9 L397.6 496.9 L396.4 497.7 L395.2 498.5 L394.0 499.1 L392.7 499.7 L391.3 500.1 L389.9 500.3 L388.4 500.4 L386.9 500.3 L385.2 499.9 L383.4 499.2 L381.4 497.7 L377.7 492.0 L377.7 492.0 L376.7 485.3 L377.2 482.8 L378.0 481.1 L379.0 479.7 L380.1 478.6 L381.3 477.7 L382.5 476.9 L383.8 476.3 L385.1 475.9 L386.5 475.5 L387.9 475.3 L389.3 475.1 L390.8 475.1 L392.3 475.1 L393.9 475.3 L395.5 475.5 L397.1 475.9 L398.8 476.4 L400.6 477.1 L402.4 477.9 L404.3 479.0 L406.6 481.0Z" fill="#5f7d52"/><path d="M406.6 481.0 L404.3 479.0 L402.4 477.9 L400.6 477.1 L398.8 476.4 L397.1 475.9 L395.5 475.5 L393.9 475.3 L392.3 475.1 L390.8 475.1 L389.3 475.1 L387.9 475.3 L386.5 475.5 L385.1 475.9 L383.8 476.3 L382.5 476.9 L381.3 477.7 L380.1 478.6 L379.0 479.7 L378.0 481.1 L377.2 482.8 L376.7 485.3 L377.7 492.0Z" fill="#82ab6f"/><path d="M406.6 481.0 L406.2 484.0 L405.5 486.1 L404.7 487.9 L403.8 489.6 L402.9 491.1 L401.9 492.5 L400.9 493.7 L399.8 494.9 L398.7 495.9 L397.6 496.9 L396.4 497.7 L395.2 498.5 L394.0 499.1 L392.7 499.7 L391.3 500.1 L389.9 500.3 L388.4 500.4 L386.9 500.3 L385.2 499.9 L383.4 499.2 L381.4 497.7 L377.7 492.0 L377.7 492.0 L376.7 485.3 L377.2 482.8 L378.0 481.1 L379.0 479.7 L380.1 478.6 L381.3 477.7 L382.5 476.9 L383.8 476.3 L385.1 475.9 L386.5 475.5 L387.9 475.3 L389.3 475.1 L390.8 475.1 L392.3 475.1 L393.9 475.3 L395.5 475.5 L397.1 475.9 L398.8 476.4 L400.6 477.1 L402.4 477.9 L404.3 479.0 L406.6 481.0Z" fill="none" stroke="#f0645c" stroke-width="0.9"/><path d="M406.6 481.0 L377.7 492.0" stroke="#f0645c" stroke-width="0.9"/><path d="M433.0 472.0 L433.9 474.4 L434.2 476.3 L434.3 478.1 L434.3 479.8 L434.2 481.5 L434.0 483.0 L433.7 484.6 L433.3 486.0 L432.9 487.4 L432.4 488.8 L431.8 490.1 L431.2 491.4 L430.5 492.6 L429.7 493.8 L428.8 494.8 L427.8 495.9 L426.7 496.8 L425.4 497.6 L424.0 498.3 L422.3 498.8 L420.1 499.0 L415.0 497.0 L415.0 497.0 L411.5 492.8 L411.0 490.6 L410.9 488.9 L411.1 487.3 L411.5 485.8 L412.0 484.5 L412.7 483.3 L413.4 482.1 L414.3 480.9 L415.2 479.9 L416.2 478.9 L417.3 477.9 L418.4 477.0 L419.6 476.2 L420.9 475.3 L422.2 474.6 L423.6 473.9 L425.2 473.3 L426.8 472.7 L428.5 472.2 L430.5 471.9 L433.0 472.0Z" fill="#5f7d52"/><path d="M433.0 472.0 L430.5 471.9 L428.5 472.2 L426.8 472.7 L425.2 473.3 L423.6 473.9 L422.2 474.6 L420.9 475.3 L419.6 476.2 L418.4 477.0 L417.3 477.9 L416.2 478.9 L415.2 479.9 L414.3 480.9 L413.4 482.1 L412.7 483.3 L412.0 484.5 L411.5 485.8 L411.1 487.3 L410.9 488.9 L411.0 490.6 L411.5 492.8 L415.0 497.0Z" fill="#82ab6f"/><path d="M433.0 472.0 L433.9 474.4 L434.2 476.3 L434.3 478.1 L434.3 479.8 L434.2 481.5 L434.0 483.0 L433.7 484.6 L433.3 486.0 L432.9 487.4 L432.4 488.8 L431.8 490.1 L431.2 491.4 L430.5 492.6 L429.7 493.8 L428.8 494.8 L427.8 495.9 L426.7 496.8 L425.4 497.6 L424.0 498.3 L422.3 498.8 L420.1 499.0 L415.0 497.0 L415.0 497.0 L411.5 492.8 L411.0 490.6 L410.9 488.9 L411.1 487.3 L411.5 485.8 L412.0 484.5 L412.7 483.3 L413.4 482.1 L414.3 480.9 L415.2 479.9 L416.2 478.9 L417.3 477.9 L418.4 477.0 L419.6 476.2 L420.9 475.3 L422.2 474.6 L423.6 473.9 L425.2 473.3 L426.8 472.7 L428.5 472.2 L430.5 471.9 L433.0 472.0Z" fill="none" stroke="#f0645c" stroke-width="0.9"/><path d="M433.0 472.0 L415.0 497.0" stroke="#f0645c" stroke-width="0.9"/><path d="M455.0 474.0 L457.8 471.3 L460.3 469.8 L462.6 468.6 L464.8 467.7 L467.0 467.0 L469.2 466.4 L471.3 466.0 L473.3 465.7 L475.3 465.5 L477.3 465.5 L479.2 465.6 L481.1 465.8 L482.9 466.2 L484.7 466.7 L486.4 467.4 L488.1 468.3 L489.7 469.4 L491.2 470.8 L492.6 472.5 L493.9 474.7 L494.8 477.8 L494.0 486.5 L494.0 486.5 L489.6 494.0 L487.0 496.0 L484.7 497.1 L482.6 497.7 L480.6 497.9 L478.6 497.9 L476.7 497.6 L474.9 497.2 L473.2 496.6 L471.5 495.8 L469.8 494.9 L468.2 493.9 L466.6 492.7 L465.1 491.4 L463.6 490.0 L462.1 488.4 L460.7 486.7 L459.3 484.8 L458.0 482.8 L456.8 480.5 L455.7 477.8 L455.0 474.0Z" fill="#5f7d52"/><path d="M455.0 474.0 L457.8 471.3 L460.3 469.8 L462.6 468.6 L464.8 467.7 L467.0 467.0 L469.2 466.4 L471.3 466.0 L473.3 465.7 L475.3 465.5 L477.3 465.5 L479.2 465.6 L481.1 465.8 L482.9 466.2 L484.7 466.7 L486.4 467.4 L488.1 468.3 L489.7 469.4 L491.2 470.8 L492.6 472.5 L493.9 474.7 L494.8 477.8 L494.0 486.5Z" fill="#82ab6f"/><path d="M455.0 474.0 L457.8 471.3 L460.3 469.8 L462.6 468.6 L464.8 467.7 L467.0 467.0 L469.2 466.4 L471.3 466.0 L473.3 465.7 L475.3 465.5 L477.3 465.5 L479.2 465.6 L481.1 465.8 L482.9 466.2 L484.7 466.7 L486.4 467.4 L488.1 468.3 L489.7 469.4 L491.2 470.8 L492.6 472.5 L493.9 474.7 L494.8 477.8 L494.0 486.5 L494.0 486.5 L489.6 494.0 L487.0 496.0 L484.7 497.1 L482.6 497.7 L480.6 497.9 L478.6 497.9 L476.7 497.6 L474.9 497.2 L473.2 496.6 L471.5 495.8 L469.8 494.9 L468.2 493.9 L466.6 492.7 L465.1 491.4 L463.6 490.0 L462.1 488.4 L460.7 486.7 L459.3 484.8 L458.0 482.8 L456.8 480.5 L455.7 477.8 L455.0 474.0Z" fill="none" stroke="#f0645c" stroke-width="0.9"/><path d="M455.0 474.0 L494.0 486.5" stroke="#f0645c" stroke-width="0.9"/><path d="M436.5 490.0 L436.5 485.9 L437.1 483.0 L437.8 480.4 L438.7 478.1 L439.7 475.9 L440.8 473.9 L441.9 472.1 L443.1 470.3 L444.4 468.8 L445.8 467.3 L447.2 466.0 L448.7 464.8 L450.2 463.7 L451.9 462.8 L453.6 462.1 L455.4 461.5 L457.4 461.2 L459.4 461.1 L461.7 461.4 L464.2 462.2 L467.2 463.8 L473.0 471.0 L473.0 471.0 L475.5 479.9 L475.2 483.3 L474.4 485.8 L473.3 487.8 L472.1 489.4 L470.7 490.8 L469.2 492.0 L467.6 493.0 L465.9 493.8 L464.1 494.5 L462.3 495.0 L460.4 495.4 L458.4 495.7 L456.4 495.8 L454.3 495.8 L452.1 495.7 L449.9 495.5 L447.6 495.0 L445.1 494.4 L442.6 493.6 L439.8 492.4 L436.5 490.0Z" fill="#5f7d52"/><path d="M436.5 490.0 L436.5 485.9 L437.1 483.0 L437.8 480.4 L438.7 478.1 L439.7 475.9 L440.8 473.9 L441.9 472.1 L443.1 470.3 L444.4 468.8 L445.8 467.3 L447.2 466.0 L448.7 464.8 L450.2 463.7 L451.9 462.8 L453.6 462.1 L455.4 461.5 L457.4 461.2 L459.4 461.1 L461.7 461.4 L464.2 462.2 L467.2 463.8 L473.0 471.0Z" fill="#82ab6f"/><path d="M436.5 490.0 L436.5 485.9 L437.1 483.0 L437.8 480.4 L438.7 478.1 L439.7 475.9 L440.8 473.9 L441.9 472.1 L443.1 470.3 L444.4 468.8 L445.8 467.3 L447.2 466.0 L448.7 464.8 L450.2 463.7 L451.9 462.8 L453.6 462.1 L455.4 461.5 L457.4 461.2 L459.4 461.1 L461.7 461.4 L464.2 462.2 L467.2 463.8 L473.0 471.0 L473.0 471.0 L475.5 479.9 L475.2 483.3 L474.4 485.8 L473.3 487.8 L472.1 489.4 L470.7 490.8 L469.2 492.0 L467.6 493.0 L465.9 493.8 L464.1 494.5 L462.3 495.0 L460.4 495.4 L458.4 495.7 L456.4 495.8 L454.3 495.8 L452.1 495.7 L449.9 495.5 L447.6 495.0 L445.1 494.4 L442.6 493.6 L439.8 492.4 L436.5 490.0Z" fill="none" stroke="#f0645c" stroke-width="0.9"/><path d="M436.5 490.0 L473.0 471.0" stroke="#f0645c" stroke-width="0.9"/><clipPath id="rp3831"><path d="M383.4 501 L487.4 501 L487.4 593.7 Q487.4 604.7 476.4 604.7 L394.4 604.7 Q383.4 604.7 383.4 593.7 Z"/></clipPath><g clip-path="url(#rp3831)"><rect x="383.4" y="501" width="104.0" height="103.70000000000005" fill="#f4994b"/><rect x="436.3" y="501" width="51.099999999999966" height="103.70000000000005" fill="#df9152"/><rect x="383.4" y="536.2" width="52.900000000000034" height="24.59999999999991" fill="#fde3b9"/><rect x="436.3" y="536.2" width="51.099999999999966" height="24.59999999999991" fill="#e4d3b1"/></g><path d="M383.4 501 L487.4 501 L487.4 593.7 Q487.4 604.7 476.4 604.7 L394.4 604.7 Q383.4 604.7 383.4 593.7 Z" fill="none" stroke="#f0645c" stroke-width="0.9"/><path d="M436.3 501 L436.3 604.7 M383.4 536.2 L487.4 536.2 M383.4 560.8 L487.4 560.8" stroke="#f0645c" stroke-width="0.9"/><rect x="206.8" y="375.8" width="294.6" height="233.7" fill="none" stroke="#f0645c" stroke-width="0.9"/><rect x="204.3" y="373.3" width="5" height="5" fill="#fff" stroke="#f0645c" stroke-width="0.9"/><rect x="351.5" y="373.3" width="5" height="5" fill="#fff" stroke="#f0645c" stroke-width="0.9"/><rect x="498.9" y="373.3" width="5" height="5" fill="#fff" stroke="#f0645c" stroke-width="0.9"/><rect x="204.3" y="490.1" width="5" height="5" fill="#fff" stroke="#f0645c" stroke-width="0.9"/><rect x="498.9" y="490.1" width="5" height="5" fill="#fff" stroke="#f0645c" stroke-width="0.9"/><rect x="204.3" y="607.0" width="5" height="5" fill="#fff" stroke="#f0645c" stroke-width="0.9"/><rect x="351.5" y="607.0" width="5" height="5" fill="#fff" stroke="#f0645c" stroke-width="0.9"/><rect x="498.9" y="607.0" width="5" height="5" fill="#fff" stroke="#f0645c" stroke-width="0.9"/><rect x="256.7" y="551" width="4" height="4" fill="#f0645c"/><rect x="432" y="546" width="4" height="4" fill="#f0645c"/><rect x="250" y="447" width="4" height="4" fill="#f0645c"/><rect x="266" y="460" width="4" height="4" fill="#f0645c"/><rect x="425" y="445" width="4" height="4" fill="#f0645c"/><rect x="443" y="456" width="4" height="4" fill="#f0645c"/><rect x="405" y="485" width="4" height="4" fill="#f0645c"/><rect x="188" y="361.6" width="329" height="262.4" fill="none" stroke="#ff0a0a" stroke-width="4" rx="1"/></g></svg>
<svg width="1024" height="676" style="top:0"><defs><filter id="psh" x="-10%" y="-10%" width="120%" height="120%"><feDropShadow dx="2" dy="2" stdDeviation="2" flood-color="#000" flood-opacity="0.3"/></filter></defs><rect x="730.5" y="175.5" width="223" height="471" rx="2" fill="#535353" filter="url(#psh)"/><path d="M730.5 188 L730.5 177.5 Q730.5 175.5 732.5 175.5 L951.5 175.5 Q953.5 175.5 953.5 177.5 L953.5 188 Z" fill="#3a3a3a"/><rect x="730.5" y="187.5" width="223" height="25" fill="#3f3f3f"/><rect x="730.5" y="187.5" width="61.5" height="25" fill="#454545"/><rect x="792" y="187.5" width="70.5" height="25" fill="#535353"/><path d="M925 182.5 L928 180 L928 185 Z M929 182.5 L932 180 L932 185 Z" fill="#c8c8c8"/><path d="M942.8 180.2 L948 185.4 M948 180.2 L942.8 185.4" stroke="#c8c8c8" stroke-width="1.6"/><path d="M938 198 L947 198 M938 200.8 L947 200.8 M938 203.6 L947 203.6" stroke="#bdbdbd" stroke-width="1"/><rect x="736.5" y="219.5" width="211" height="202" rx="2" fill="#525252" stroke="#5e5e5e" stroke-width="1"/><rect x="740.5" y="223.5" width="59" height="59" fill="#e6e6e6" stroke="#3a9ef5" stroke-width="2"/><g transform="translate(702.6 158.4) scale(0.19)"><path d="M256.5 507 C256 492 258 480 260 470 C263 455 272 440 282 423" fill="none" stroke="#82ab6f" stroke-width="4.2" stroke-linecap="butt"/><path d="M258.5 478 C257 462 252 442 244 427" fill="none" stroke="#82ab6f" stroke-width="3.6" stroke-linecap="butt"/><path d="M281.0 424.0 L278.5 420.1 L277.2 416.9 L276.4 414.0 L275.8 411.1 L275.4 408.4 L275.2 405.8 L275.1 403.2 L275.2 400.8 L275.4 398.4 L275.8 396.1 L276.4 393.9 L277.0 391.7 L277.9 389.7 L278.9 387.7 L280.1 385.8 L281.5 384.0 L283.1 382.4 L285.0 380.9 L287.3 379.6 L290.2 378.6 L294.0 378.2 L304.0 381.0 L304.0 381.0 L311.9 387.7 L313.6 391.2 L314.4 394.1 L314.6 396.7 L314.5 399.2 L314.0 401.4 L313.3 403.6 L312.4 405.6 L311.3 407.5 L310.0 409.4 L308.6 411.1 L307.1 412.8 L305.4 414.4 L303.5 415.9 L301.5 417.4 L299.4 418.8 L297.1 420.0 L294.6 421.2 L291.9 422.3 L289.0 423.2 L285.6 424.0 L281.0 424.0Z" fill="#5f7d52"/><path d="M281.0 424.0 L278.5 420.1 L277.2 416.9 L276.4 414.0 L275.8 411.1 L275.4 408.4 L275.2 405.8 L275.1 403.2 L275.2 400.8 L275.4 398.4 L275.8 396.1 L276.4 393.9 L277.0 391.7 L277.9 389.7 L278.9 387.7 L280.1 385.8 L281.5 384.0 L283.1 382.4 L285.0 380.9 L287.3 379.6 L290.2 378.6 L294.0 378.2 L304.0 381.0Z" fill="#82ab6f"/><path d="M244.4 427.0 L242.0 429.1 L239.9 430.3 L237.8 431.3 L235.9 432.0 L234.0 432.5 L232.1 433.0 L230.2 433.3 L228.4 433.5 L226.7 433.6 L224.9 433.6 L223.2 433.4 L221.6 433.2 L219.9 432.9 L218.3 432.4 L216.8 431.8 L215.3 431.0 L213.8 430.1 L212.5 429.0 L211.2 427.5 L210.0 425.7 L209.1 423.1 L209.6 416.0 L209.6 416.0 L213.3 409.9 L215.5 408.3 L217.5 407.5 L219.4 407.0 L221.2 406.9 L222.9 407.0 L224.6 407.2 L226.2 407.6 L227.7 408.1 L229.3 408.8 L230.8 409.6 L232.2 410.4 L233.7 411.4 L235.1 412.5 L236.4 413.7 L237.7 415.0 L239.0 416.5 L240.3 418.0 L241.5 419.7 L242.6 421.7 L243.7 423.9 L244.4 427.0Z" fill="#5f7d52"/><path d="M244.4 427.0 L243.7 423.9 L242.6 421.7 L241.5 419.7 L240.3 418.0 L239.0 416.5 L237.7 415.0 L236.4 413.7 L235.1 412.5 L233.7 411.4 L232.2 410.4 L230.8 409.6 L229.3 408.8 L227.7 408.1 L226.2 407.6 L224.6 407.2 L222.9 407.0 L221.2 406.9 L219.4 407.0 L217.5 407.5 L215.5 408.3 L213.3 409.9 L209.6 416.0Z" fill="#82ab6f"/><path d="M244.4 427.0 L241.4 427.4 L239.2 427.2 L237.2 426.8 L235.3 426.3 L233.6 425.7 L232.0 425.1 L230.4 424.3 L228.9 423.6 L227.6 422.7 L226.3 421.8 L225.0 420.8 L223.9 419.8 L222.9 418.6 L221.9 417.5 L221.1 416.2 L220.3 414.8 L219.7 413.4 L219.3 411.8 L219.1 410.0 L219.2 408.0 L219.9 405.6 L224.0 400.5 L224.0 400.5 L230.0 397.8 L232.5 397.8 L234.5 398.2 L236.1 398.9 L237.5 399.7 L238.8 400.6 L239.9 401.7 L240.9 402.8 L241.8 404.0 L242.6 405.3 L243.4 406.7 L244.0 408.1 L244.5 409.6 L245.0 411.2 L245.4 412.8 L245.7 414.5 L245.9 416.2 L246.0 418.1 L246.0 420.0 L245.9 422.0 L245.5 424.2 L244.4 427.0Z" fill="#5f7d52"/><path d="M244.4 427.0 L245.5 424.2 L245.9 422.0 L246.0 420.0 L246.0 418.1 L245.9 416.2 L245.7 414.5 L245.4 412.8 L245.0 411.2 L244.5 409.6 L244.0 408.1 L243.4 406.7 L242.6 405.3 L241.8 404.0 L240.9 402.8 L239.9 401.7 L238.8 400.6 L237.5 399.7 L236.1 398.9 L234.5 398.2 L232.5 397.8 L230.0 397.8 L224.0 400.5Z" fill="#82ab6f"/><path d="M256.0 472.0 L253.0 474.4 L250.4 475.7 L248.1 476.6 L245.8 477.3 L243.6 477.8 L241.5 478.2 L239.4 478.4 L237.4 478.5 L235.5 478.5 L233.6 478.4 L231.7 478.1 L230.0 477.7 L228.2 477.1 L226.6 476.4 L225.0 475.6 L223.5 474.6 L222.1 473.3 L220.8 471.8 L219.7 470.0 L218.7 467.7 L218.2 464.5 L220.0 456.0 L220.0 456.0 L225.1 449.0 L227.8 447.2 L230.2 446.4 L232.3 446.0 L234.3 446.0 L236.1 446.2 L237.9 446.6 L239.6 447.2 L241.2 448.0 L242.8 448.9 L244.3 449.9 L245.7 451.1 L247.1 452.4 L248.4 453.8 L249.7 455.4 L250.9 457.1 L252.0 458.9 L253.1 460.9 L254.1 463.0 L255.0 465.4 L255.7 468.2 L256.0 472.0Z" fill="#5f7d52"/><path d="M256.0 472.0 L255.7 468.2 L255.0 465.4 L254.1 463.0 L253.1 460.9 L252.0 458.9 L250.9 457.1 L249.7 455.4 L248.4 453.8 L247.1 452.4 L245.7 451.1 L244.3 449.9 L242.8 448.9 L241.2 448.0 L239.6 447.2 L237.9 446.6 L236.1 446.2 L234.3 446.0 L232.3 446.0 L230.2 446.4 L227.8 447.2 L225.1 449.0 L220.0 456.0Z" fill="#82ab6f"/><path d="M270.0 450.0 L270.6 447.7 L271.4 446.1 L272.3 444.6 L273.2 443.4 L274.1 442.2 L275.1 441.1 L276.1 440.2 L277.2 439.3 L278.2 438.4 L279.3 437.7 L280.5 437.0 L281.6 436.5 L282.8 436.0 L284.0 435.5 L285.2 435.2 L286.5 435.0 L287.8 435.0 L289.1 435.1 L290.5 435.3 L292.1 435.9 L293.8 437.1 L296.5 441.5 L296.5 441.5 L296.8 446.7 L296.1 448.6 L295.2 450.0 L294.2 451.0 L293.2 451.9 L292.1 452.6 L290.9 453.2 L289.8 453.6 L288.6 454.0 L287.3 454.3 L286.0 454.5 L284.8 454.6 L283.4 454.6 L282.1 454.6 L280.7 454.4 L279.3 454.2 L277.9 453.9 L276.5 453.5 L275.0 453.0 L273.4 452.4 L271.8 451.5 L270.0 450.0Z" fill="#5f7d52"/><path d="M270.0 450.0 L270.6 447.7 L271.4 446.1 L272.3 444.6 L273.2 443.4 L274.1 442.2 L275.1 441.1 L276.1 440.2 L277.2 439.3 L278.2 438.4 L279.3 437.7 L280.5 437.0 L281.6 436.5 L282.8 436.0 L284.0 435.5 L285.2 435.2 L286.5 435.0 L287.8 435.0 L289.1 435.1 L290.5 435.3 L292.1 435.9 L293.8 437.1 L296.5 441.5Z" fill="#82ab6f"/><path d="M260.0 496.0 L260.1 491.9 L260.8 488.9 L261.6 486.3 L262.6 484.0 L263.7 481.8 L264.9 479.8 L266.1 478.0 L267.4 476.2 L268.8 474.6 L270.2 473.2 L271.7 471.9 L273.2 470.7 L274.9 469.6 L276.6 468.7 L278.4 468.0 L280.3 467.4 L282.2 467.1 L284.4 467.0 L286.7 467.3 L289.2 468.1 L292.2 469.8 L298.0 477.0 L298.0 477.0 L300.3 485.9 L299.9 489.4 L299.0 491.9 L297.8 493.9 L296.5 495.5 L295.0 496.9 L293.4 498.1 L291.8 499.1 L290.0 499.9 L288.2 500.6 L286.3 501.1 L284.4 501.5 L282.3 501.8 L280.2 501.9 L278.1 501.9 L275.9 501.8 L273.6 501.5 L271.2 501.1 L268.7 500.5 L266.1 499.6 L263.3 498.4 L260.0 496.0Z" fill="#5f7d52"/><path d="M260.0 496.0 L260.1 491.9 L260.8 488.9 L261.6 486.3 L262.6 484.0 L263.7 481.8 L264.9 479.8 L266.1 478.0 L267.4 476.2 L268.8 474.6 L270.2 473.2 L271.7 471.9 L273.2 470.7 L274.9 469.6 L276.6 468.7 L278.4 468.0 L280.3 467.4 L282.2 467.1 L284.4 467.0 L286.7 467.3 L289.2 468.1 L292.2 469.8 L298.0 477.0Z" fill="#82ab6f"/><clipPath id="rp2070"><path d="M207.2 506 L310.6 506 L310.6 598.4 Q310.6 609.4 299.6 609.4 L218.2 609.4 Q207.2 609.4 207.2 598.4 Z"/></clipPath><g clip-path="url(#rp2070)"><rect x="207.2" y="506" width="103.40000000000003" height="103.39999999999998" fill="#f4994b"/><rect x="258.7" y="506" width="51.900000000000034" height="103.39999999999998" fill="#df9152"/><rect x="207.2" y="540.6" width="51.5" height="25.799999999999955" fill="#fde3b9"/><rect x="258.7" y="540.6" width="51.900000000000034" height="25.799999999999955" fill="#e4d3b1"/></g><path d="M434 501 C434 480 430 455 441 414" fill="none" stroke="#82ab6f" stroke-width="4.2" stroke-linecap="butt"/><path d="M437 501 C440 475 445 440 458.7 416.6" fill="none" stroke="#82ab6f" stroke-width="4.2" stroke-linecap="butt"/><path d="M432 480 C430 460 428 440 420 423" fill="none" stroke="#82ab6f" stroke-width="3.6" stroke-linecap="butt"/><path d="M420 510 C415 495 405 480 395.5 465" fill="none" stroke="#82ab6f" stroke-width="3.6" stroke-linecap="butt"/><path d="M455 504 C455 480 452 460 440 445" fill="none" stroke="#82ab6f" stroke-width="4" stroke-linecap="butt"/><path d="M441.0 414.0 L437.2 412.9 L434.6 411.5 L432.4 410.1 L430.5 408.7 L428.8 407.2 L427.3 405.7 L426.0 404.2 L424.8 402.7 L423.7 401.1 L422.8 399.5 L422.1 397.9 L421.4 396.3 L421.0 394.6 L420.7 393.0 L420.6 391.3 L420.7 389.5 L421.0 387.7 L421.6 385.9 L422.7 384.1 L424.2 382.1 L426.8 380.0 L435.5 377.0 L435.5 377.0 L444.7 377.4 L447.8 378.6 L449.8 380.0 L451.4 381.5 L452.5 383.1 L453.3 384.7 L453.9 386.3 L454.3 388.0 L454.5 389.6 L454.6 391.4 L454.4 393.1 L454.2 394.9 L453.8 396.6 L453.2 398.4 L452.5 400.3 L451.7 402.1 L450.7 404.0 L449.5 405.9 L448.1 407.8 L446.4 409.8 L444.3 411.8 L441.0 414.0Z" fill="#5f7d52"/><path d="M441.0 414.0 L444.3 411.8 L446.4 409.8 L448.1 407.8 L449.5 405.9 L450.7 404.0 L451.7 402.1 L452.5 400.3 L453.2 398.4 L453.8 396.6 L454.2 394.9 L454.4 393.1 L454.6 391.4 L454.5 389.6 L454.3 388.0 L453.9 386.3 L453.3 384.7 L452.5 383.1 L451.4 381.5 L449.8 380.0 L447.8 378.6 L444.7 377.4 L435.5 377.0Z" fill="#82ab6f"/><path d="M458.7 416.6 L458.5 412.4 L459.0 409.2 L459.7 406.3 L460.6 403.7 L461.6 401.2 L462.7 398.9 L463.9 396.8 L465.2 394.7 L466.6 392.8 L468.1 391.0 L469.6 389.3 L471.2 387.7 L472.9 386.3 L474.7 385.0 L476.7 383.9 L478.7 382.9 L480.9 382.1 L483.2 381.6 L485.7 381.4 L488.6 381.7 L492.1 382.8 L499.0 389.0 L499.0 389.0 L502.3 397.7 L502.1 401.3 L501.3 404.1 L500.2 406.4 L498.8 408.4 L497.3 410.1 L495.7 411.7 L493.9 413.1 L492.1 414.3 L490.1 415.4 L488.1 416.3 L486.0 417.1 L483.8 417.8 L481.5 418.4 L479.1 418.9 L476.6 419.2 L474.1 419.4 L471.4 419.5 L468.7 419.4 L465.7 419.0 L462.6 418.3 L458.7 416.6Z" fill="#5f7d52"/><path d="M458.7 416.6 L458.5 412.4 L459.0 409.2 L459.7 406.3 L460.6 403.7 L461.6 401.2 L462.7 398.9 L463.9 396.8 L465.2 394.7 L466.6 392.8 L468.1 391.0 L469.6 389.3 L471.2 387.7 L472.9 386.3 L474.7 385.0 L476.7 383.9 L478.7 382.9 L480.9 382.1 L483.2 381.6 L485.7 381.4 L488.6 381.7 L492.1 382.8 L499.0 389.0Z" fill="#82ab6f"/><path d="M456.5 454.3 L456.9 449.9 L457.9 446.7 L459.1 443.9 L460.4 441.4 L461.8 439.1 L463.2 436.9 L464.8 434.9 L466.4 433.1 L468.0 431.4 L469.8 429.8 L471.6 428.4 L473.4 427.1 L475.3 426.0 L477.4 425.0 L479.4 424.2 L481.6 423.6 L483.9 423.3 L486.3 423.2 L488.9 423.5 L491.7 424.4 L495.0 426.2 L501.0 434.0 L501.0 434.0 L502.9 443.6 L502.2 447.3 L501.0 450.0 L499.5 452.2 L497.9 453.9 L496.1 455.4 L494.2 456.7 L492.3 457.8 L490.2 458.6 L488.1 459.4 L485.9 459.9 L483.7 460.3 L481.4 460.6 L479.0 460.8 L476.6 460.8 L474.0 460.6 L471.5 460.3 L468.8 459.8 L466.0 459.1 L463.2 458.2 L460.1 456.9 L456.5 454.3Z" fill="#5f7d52"/><path d="M456.5 454.3 L456.9 449.9 L457.9 446.7 L459.1 443.9 L460.4 441.4 L461.8 439.1 L463.2 436.9 L464.8 434.9 L466.4 433.1 L468.0 431.4 L469.8 429.8 L471.6 428.4 L473.4 427.1 L475.3 426.0 L477.4 425.0 L479.4 424.2 L481.6 423.6 L483.9 423.3 L486.3 423.2 L488.9 423.5 L491.7 424.4 L495.0 426.2 L501.0 434.0Z" fill="#82ab6f"/><path d="M421.0 422.0 L419.0 424.5 L417.2 426.0 L415.3 427.2 L413.5 428.3 L411.7 429.1 L409.9 429.9 L408.2 430.5 L406.4 431.0 L404.7 431.5 L402.9 431.8 L401.2 432.0 L399.5 432.1 L397.8 432.0 L396.1 431.9 L394.4 431.6 L392.8 431.2 L391.2 430.5 L389.5 429.7 L388.0 428.6 L386.4 427.1 L385.0 424.8 L384.0 418.0 L384.0 418.0 L386.4 411.6 L388.3 409.7 L390.1 408.5 L391.9 407.7 L393.7 407.3 L395.4 407.0 L397.1 407.0 L398.8 407.0 L400.5 407.2 L402.1 407.6 L403.8 408.0 L405.4 408.6 L407.1 409.3 L408.7 410.0 L410.3 410.9 L411.9 411.9 L413.5 413.0 L415.0 414.3 L416.6 415.7 L418.1 417.3 L419.6 419.2 L421.0 422.0Z" fill="#5f7d52"/><path d="M421.0 422.0 L419.6 419.2 L418.1 417.3 L416.6 415.7 L415.0 414.3 L413.5 413.0 L411.9 411.9 L410.3 410.9 L408.7 410.0 L407.1 409.3 L405.4 408.6 L403.8 408.0 L402.1 407.6 L400.5 407.2 L398.8 407.0 L397.1 407.0 L395.4 407.0 L393.7 407.3 L391.9 407.7 L390.1 408.5 L388.3 409.7 L386.4 411.6 L384.0 418.0Z" fill="#82ab6f"/><path d="M421.5 422.0 L418.6 422.4 L416.4 422.3 L414.4 421.9 L412.6 421.5 L410.9 421.0 L409.3 420.4 L407.8 419.7 L406.4 418.9 L405.0 418.1 L403.8 417.3 L402.6 416.3 L401.5 415.3 L400.5 414.3 L399.6 413.1 L398.8 411.9 L398.1 410.6 L397.5 409.2 L397.1 407.7 L397.0 406.0 L397.1 404.0 L397.8 401.6 L402.0 396.6 L402.0 396.6 L407.9 393.9 L410.4 393.8 L412.4 394.2 L414.0 394.8 L415.3 395.5 L416.6 396.4 L417.6 397.4 L418.6 398.5 L419.5 399.7 L420.2 401.0 L420.9 402.3 L421.5 403.6 L422.0 405.1 L422.5 406.6 L422.8 408.2 L423.1 409.8 L423.2 411.5 L423.3 413.3 L423.3 415.1 L423.1 417.1 L422.6 419.3 L421.5 422.0Z" fill="#5f7d52"/><path d="M421.5 422.0 L422.6 419.3 L423.1 417.1 L423.3 415.1 L423.3 413.3 L423.2 411.5 L423.1 409.8 L422.8 408.2 L422.5 406.6 L422.0 405.1 L421.5 403.6 L420.9 402.3 L420.2 401.0 L419.5 399.7 L418.6 398.5 L417.6 397.4 L416.6 396.4 L415.3 395.5 L414.0 394.8 L412.4 394.2 L410.4 393.8 L407.9 393.9 L402.0 396.6Z" fill="#82ab6f"/><path d="M442.0 444.0 L440.2 444.3 L438.7 444.3 L437.5 444.1 L436.3 443.9 L435.2 443.6 L434.1 443.2 L433.1 442.8 L432.1 442.4 L431.2 441.9 L430.4 441.3 L429.6 440.8 L428.8 440.1 L428.1 439.5 L427.4 438.8 L426.9 438.0 L426.3 437.2 L425.9 436.3 L425.6 435.3 L425.3 434.2 L425.3 432.9 L425.6 431.4 L428.0 428.0 L428.0 428.0 L431.6 426.1 L433.2 426.0 L434.5 426.2 L435.5 426.5 L436.5 427.0 L437.3 427.6 L438.1 428.2 L438.7 428.9 L439.4 429.6 L439.9 430.4 L440.4 431.2 L440.9 432.1 L441.3 433.0 L441.7 434.0 L442.0 435.0 L442.3 436.1 L442.5 437.2 L442.6 438.3 L442.7 439.5 L442.7 440.8 L442.6 442.2 L442.0 444.0Z" fill="#5f7d52"/><path d="M442.0 444.0 L442.6 442.2 L442.7 440.8 L442.7 439.5 L442.6 438.3 L442.5 437.2 L442.3 436.1 L442.0 435.0 L441.7 434.0 L441.3 433.0 L440.9 432.1 L440.4 431.2 L439.9 430.4 L439.4 429.6 L438.7 428.9 L438.1 428.2 L437.3 427.6 L436.5 427.0 L435.5 426.5 L434.5 426.2 L433.2 426.0 L431.6 426.1 L428.0 428.0Z" fill="#82ab6f"/><path d="M395.5 465.4 L392.2 466.4 L389.7 466.6 L387.4 466.5 L385.3 466.4 L383.3 466.1 L381.4 465.6 L379.6 465.1 L377.9 464.5 L376.2 463.9 L374.7 463.1 L373.2 462.3 L371.9 461.3 L370.6 460.3 L369.4 459.2 L368.3 457.9 L367.4 456.6 L366.5 455.1 L365.9 453.4 L365.5 451.5 L365.4 449.3 L365.9 446.4 L370.0 440.0 L370.0 440.0 L376.4 435.9 L379.2 435.4 L381.5 435.4 L383.4 435.9 L385.0 436.5 L386.5 437.3 L387.9 438.2 L389.1 439.3 L390.3 440.5 L391.3 441.8 L392.3 443.1 L393.1 444.6 L393.9 446.2 L394.6 447.8 L395.2 449.5 L395.7 451.3 L396.1 453.2 L396.4 455.2 L396.6 457.3 L396.6 459.6 L396.4 462.1 L395.5 465.4Z" fill="#5f7d52"/><path d="M395.5 465.4 L396.4 462.1 L396.6 459.6 L396.6 457.3 L396.4 455.2 L396.1 453.2 L395.7 451.3 L395.2 449.5 L394.6 447.8 L393.9 446.2 L393.1 444.6 L392.3 443.1 L391.3 441.8 L390.3 440.5 L389.1 439.3 L387.9 438.2 L386.5 437.3 L385.0 436.5 L383.4 435.9 L381.5 435.4 L379.2 435.4 L376.4 435.9 L370.0 440.0Z" fill="#82ab6f"/><path d="M433.0 472.0 L429.7 474.1 L427.0 475.2 L424.5 475.9 L422.1 476.4 L419.8 476.7 L417.7 476.8 L415.6 476.9 L413.6 476.7 L411.6 476.5 L409.7 476.2 L407.9 475.7 L406.2 475.1 L404.6 474.4 L403.0 473.5 L401.5 472.5 L400.2 471.3 L398.9 469.9 L397.8 468.2 L396.9 466.2 L396.2 463.8 L396.1 460.5 L399.0 452.0 L399.0 452.0 L405.0 445.3 L407.9 443.9 L410.4 443.2 L412.6 443.1 L414.6 443.2 L416.4 443.6 L418.1 444.3 L419.7 445.1 L421.3 446.0 L422.7 447.1 L424.1 448.3 L425.3 449.7 L426.6 451.1 L427.7 452.7 L428.8 454.4 L429.8 456.3 L430.7 458.2 L431.5 460.4 L432.3 462.7 L432.8 465.2 L433.2 468.1 L433.0 472.0Z" fill="#5f7d52"/><path d="M433.0 472.0 L433.2 468.1 L432.8 465.2 L432.3 462.7 L431.5 460.4 L430.7 458.2 L429.8 456.3 L428.8 454.4 L427.7 452.7 L426.6 451.1 L425.3 449.7 L424.1 448.3 L422.7 447.1 L421.3 446.0 L419.7 445.1 L418.1 444.3 L416.4 443.6 L414.6 443.2 L412.6 443.1 L410.4 443.2 L407.9 443.9 L405.0 445.3 L399.0 452.0Z" fill="#82ab6f"/><path d="M406.6 481.0 L406.2 484.0 L405.5 486.1 L404.7 487.9 L403.8 489.6 L402.9 491.1 L401.9 492.5 L400.9 493.7 L399.8 494.9 L398.7 495.9 L397.6 496.9 L396.4 497.7 L395.2 498.5 L394.0 499.1 L392.7 499.7 L391.3 500.1 L389.9 500.3 L388.4 500.4 L386.9 500.3 L385.2 499.9 L383.4 499.2 L381.4 497.7 L377.7 492.0 L377.7 492.0 L376.7 485.3 L377.2 482.8 L378.0 481.1 L379.0 479.7 L380.1 478.6 L381.3 477.7 L382.5 476.9 L383.8 476.3 L385.1 475.9 L386.5 475.5 L387.9 475.3 L389.3 475.1 L390.8 475.1 L392.3 475.1 L393.9 475.3 L395.5 475.5 L397.1 475.9 L398.8 476.4 L400.6 477.1 L402.4 477.9 L404.3 479.0 L406.6 481.0Z" fill="#5f7d52"/><path d="M406.6 481.0 L404.3 479.0 L402.4 477.9 L400.6 477.1 L398.8 476.4 L397.1 475.9 L395.5 475.5 L393.9 475.3 L392.3 475.1 L390.8 475.1 L389.3 475.1 L387.9 475.3 L386.5 475.5 L385.1 475.9 L383.8 476.3 L382.5 476.9 L381.3 477.7 L380.1 478.6 L379.0 479.7 L378.0 481.1 L377.2 482.8 L376.7 485.3 L377.7 492.0Z" fill="#82ab6f"/><path d="M433.0 472.0 L433.9 474.4 L434.2 476.3 L434.3 478.1 L434.3 479.8 L434.2 481.5 L434.0 483.0 L433.7 484.6 L433.3 486.0 L432.9 487.4 L432.4 488.8 L431.8 490.1 L431.2 491.4 L430.5 492.6 L429.7 493.8 L428.8 494.8 L427.8 495.9 L426.7 496.8 L425.4 497.6 L424.0 498.3 L422.3 498.8 L420.1 499.0 L415.0 497.0 L415.0 497.0 L411.5 492.8 L411.0 490.6 L410.9 488.9 L411.1 487.3 L411.5 485.8 L412.0 484.5 L412.7 483.3 L413.4 482.1 L414.3 480.9 L415.2 479.9 L416.2 478.9 L417.3 477.9 L418.4 477.0 L419.6 476.2 L420.9 475.3 L422.2 474.6 L423.6 473.9 L425.2 473.3 L426.8 472.7 L428.5 472.2 L430.5 471.9 L433.0 472.0Z" fill="#5f7d52"/><path d="M433.0 472.0 L430.5 471.9 L428.5 472.2 L426.8 472.7 L425.2 473.3 L423.6 473.9 L422.2 474.6 L420.9 475.3 L419.6 476.2 L418.4 477.0 L417.3 477.9 L416.2 478.9 L415.2 479.9 L414.3 480.9 L413.4 482.1 L412.7 483.3 L412.0 484.5 L411.5 485.8 L411.1 487.3 L410.9 488.9 L411.0 490.6 L411.5 492.8 L415.0 497.0Z" fill="#82ab6f"/><path d="M455.0 474.0 L457.8 471.3 L460.3 469.8 L462.6 468.6 L464.8 467.7 L467.0 467.0 L469.2 466.4 L471.3 466.0 L473.3 465.7 L475.3 465.5 L477.3 465.5 L479.2 465.6 L481.1 465.8 L482.9 466.2 L484.7 466.7 L486.4 467.4 L488.1 468.3 L489.7 469.4 L491.2 470.8 L492.6 472.5 L493.9 474.7 L494.8 477.8 L494.0 486.5 L494.0 486.5 L489.6 494.0 L487.0 496.0 L484.7 497.1 L482.6 497.7 L480.6 497.9 L478.6 497.9 L476.7 497.6 L474.9 497.2 L473.2 496.6 L471.5 495.8 L469.8 494.9 L468.2 493.9 L466.6 492.7 L465.1 491.4 L463.6 490.0 L462.1 488.4 L460.7 486.7 L459.3 484.8 L458.0 482.8 L456.8 480.5 L455.7 477.8 L455.0 474.0Z" fill="#5f7d52"/><path d="M455.0 474.0 L457.8 471.3 L460.3 469.8 L462.6 468.6 L464.8 467.7 L467.0 467.0 L469.2 466.4 L471.3 466.0 L473.3 465.7 L475.3 465.5 L477.3 465.5 L479.2 465.6 L481.1 465.8 L482.9 466.2 L484.7 466.7 L486.4 467.4 L488.1 468.3 L489.7 469.4 L491.2 470.8 L492.6 472.5 L493.9 474.7 L494.8 477.8 L494.0 486.5Z" fill="#82ab6f"/><path d="M436.5 490.0 L436.5 485.9 L437.1 483.0 L437.8 480.4 L438.7 478.1 L439.7 475.9 L440.8 473.9 L441.9 472.1 L443.1 470.3 L444.4 468.8 L445.8 467.3 L447.2 466.0 L448.7 464.8 L450.2 463.7 L451.9 462.8 L453.6 462.1 L455.4 461.5 L457.4 461.2 L459.4 461.1 L461.7 461.4 L464.2 462.2 L467.2 463.8 L473.0 471.0 L473.0 471.0 L475.5 479.9 L475.2 483.3 L474.4 485.8 L473.3 487.8 L472.1 489.4 L470.7 490.8 L469.2 492.0 L467.6 493.0 L465.9 493.8 L464.1 494.5 L462.3 495.0 L460.4 495.4 L458.4 495.7 L456.4 495.8 L454.3 495.8 L452.1 495.7 L449.9 495.5 L447.6 495.0 L445.1 494.4 L442.6 493.6 L439.8 492.4 L436.5 490.0Z" fill="#5f7d52"/><path d="M436.5 490.0 L436.5 485.9 L437.1 483.0 L437.8 480.4 L438.7 478.1 L439.7 475.9 L440.8 473.9 L441.9 472.1 L443.1 470.3 L444.4 468.8 L445.8 467.3 L447.2 466.0 L448.7 464.8 L450.2 463.7 L451.9 462.8 L453.6 462.1 L455.4 461.5 L457.4 461.2 L459.4 461.1 L461.7 461.4 L464.2 462.2 L467.2 463.8 L473.0 471.0Z" fill="#82ab6f"/><clipPath id="rp3830"><path d="M383.4 501 L487.4 501 L487.4 593.7 Q487.4 604.7 476.4 604.7 L394.4 604.7 Q383.4 604.7 383.4 593.7 Z"/></clipPath><g clip-path="url(#rp3830)"><rect x="383.4" y="501" width="104.0" height="103.70000000000005" fill="#f4994b"/><rect x="436.3" y="501" width="51.099999999999966" height="103.70000000000005" fill="#df9152"/><rect x="383.4" y="536.2" width="52.900000000000034" height="24.59999999999991" fill="#fde3b9"/><rect x="436.3" y="536.2" width="51.099999999999966" height="24.59999999999991" fill="#e4d3b1"/></g></g><path d="M740.5 430.5 L751 430.5 L745.75 435.5 Z" fill="#d6d6d6"/><rect x="736" y="441" width="212" height="1" fill="#474747"/><rect x="884" y="427" width="9.5" height="9.5" fill="none" stroke="#c8c8c8" stroke-width="1.1"/><path d="M888.75 429 L888.75 434.5 M886 431.75 L891.5 431.75" stroke="#c8c8c8" stroke-width="1.1"/><path d="M909 427.5 L909 425.5 L917.5 425.5 L917.5 434 L915.5 434 M907.5 429 L907.5 427.5 L916 427.5 L916 435.5 L914 435.5" fill="none" stroke="#c8c8c8" stroke-width="1"/><rect x="906" y="429.5" width="8" height="8" fill="#535353" stroke="#c8c8c8" stroke-width="1.1"/><path d="M910 431 L910 436 M907.5 433.5 L912.5 433.5" stroke="#c8c8c8" stroke-width="1"/><path d="M931.5 428.5 L940.5 428.5 M934.5 428.5 L934.5 426.5 L937.5 426.5 L937.5 428.5 M932.5 429.5 L933.3 437 L938.7 437 L939.5 429.5 M934.7 430.5 L934.7 436 M936 430.5 L936 436 M937.3 430.5 L937.3 436" fill="none" stroke="#c8c8c8" stroke-width="1"/><rect x="736.5" y="459.5" width="211" height="157" rx="2" fill="#525252" stroke="#5a5a5a" stroke-width="1"/><rect x="742" y="478.5" width="39" height="19.5" fill="#585858"/><rect x="781.5" y="479" width="18" height="19" rx="2" fill="#525252" stroke="#6a6a6a" stroke-width="1"/><path d="M787.5 486 L793.5 486 L790.5 490 Z" fill="#6e6e6e"/><rect x="802.5" y="479" width="43" height="19" rx="2" fill="#4a4a4a" stroke="#565656" stroke-width="1"/><rect x="849.5" y="478.5" width="62" height="19.5" rx="1" fill="#4a4a4a"/><path d="M900.5 486.5 L903.75 489.7 L907 486.5" stroke="#e8e8e8" stroke-width="1.5" fill="none"/><path d="M917.5 484.5 L926.5 493 M926.5 484.5 L917.5 493" stroke="#6a6a6a" stroke-width="1.1"/><rect x="742" y="507" width="191.5" height="21.5" fill="#464646"/><path d="M815.3 511.5 L815.3 520 M811 515.75 L819.5 515.75" stroke="#f0f0f0" stroke-width="1.4"/><circle cx="743.2" cy="628.5" r="6" fill="none" stroke="#c8c8c8" stroke-width="1.2"/><rect x="742.5" y="627" width="1.5" height="5" fill="#c8c8c8"/><rect x="742.5" y="624.5" width="1.5" height="1.5" fill="#c8c8c8"/><rect x="854" y="619.5" width="15" height="15" fill="#cfcfcf"/><rect x="855" y="623" width="13" height="10.5" fill="#535353"/><path d="M857 626 L858.5 626 M860 626 L866 626 M857 630 L858.5 630 M860 630 L866 630" stroke="#cfcfcf" stroke-width="1.1"/><rect x="878.5" y="620.5" width="58" height="16" rx="2" fill="#4d4d4d" stroke="#727272" stroke-width="1"/><rect x="730.5" y="638.5" width="223" height="8" fill="#454545"/><rect x="730.5" y="638" width="223" height="1.2" fill="#2e2e2e"/><rect x="833" y="641" width="1" height="3" fill="#2f2f2f"/><rect x="835" y="641" width="1" height="3" fill="#2f2f2f"/><rect x="837" y="641" width="1" height="3" fill="#2f2f2f"/><rect x="839" y="641" width="1" height="3" fill="#2f2f2f"/><rect x="841" y="641" width="1" height="3" fill="#2f2f2f"/><rect x="843" y="641" width="1" height="3" fill="#2f2f2f"/><rect x="845" y="641" width="1" height="3" fill="#2f2f2f"/><rect x="847" y="641" width="1" height="3" fill="#2f2f2f"/><rect x="849" y="641" width="1" height="3" fill="#2f2f2f"/></svg>
<div class="t" style="left:740.0px;top:195.70px;font-size:9.8px;color:#a8a8a8;font-weight:bold;transform:scaleX(0.8972);transform-origin:0 0;">Artboards</div>
<div class="t" style="left:800.5px;top:195.70px;font-size:9.8px;color:#f0f0f0;font-weight:bold;transform:scaleX(0.8819);transform-origin:0 0;">Asset Export</div>
<div class="t" style="left:741.3px;top:283.96px;font-size:9.5px;color:#d0d0d0;font-weight:normal;transform:scaleX(0.9467);transform-origin:0 0;">Asset 5</div>
<div class="t" style="left:755.2px;top:426.74px;font-size:10px;color:#d2d2d2;font-weight:normal;transform:scaleX(0.9158);transform-origin:0 0;">Export Settings</div>
<div class="t" style="left:877.0px;top:446.37px;font-size:9.6px;color:#e0e0e0;font-weight:bold;transform:scaleX(0.8453);transform-origin:0 0;">iOS</div>
<div class="t" style="left:908.0px;top:446.37px;font-size:9.6px;color:#e0e0e0;font-weight:bold;transform:scaleX(0.8584);transform-origin:0 0;">Android</div>
<div class="t" style="left:742.3px;top:463.87px;font-size:9.6px;color:#6e6e6e;font-weight:normal;transform:scaleX(0.8792);transform-origin:0 0;">Scale</div>
<div class="t" style="left:802.4px;top:463.87px;font-size:9.6px;color:#6e6e6e;font-weight:normal;transform:scaleX(0.9491);transform-origin:0 0;">Suffix</div>
<div class="t" style="left:848.8px;top:463.37px;font-size:9.6px;color:#6e6e6e;font-weight:normal;transform:scaleX(0.9449);transform-origin:0 0;">Format</div>
<div class="t" style="left:806.0px;top:483.54px;font-size:10px;color:#6e6e6e;font-weight:normal;transform:scaleX(0.9191);transform-origin:0 0;">None</div>
<div class="t" style="left:854.0px;top:483.39px;font-size:11px;color:#f4f4f4;font-weight:bold;transform:scaleX(0.8086);transform-origin:0 0;">SVG</div>
<div class="t" style="left:825.5px;top:513.48px;font-size:10.3px;color:#f0f0f0;font-weight:bold;transform:scaleX(0.8191);transform-origin:0 0;">Add Scale</div>
<div class="t" style="left:890.8px;top:624.53px;font-size:10px;color:#f2f2f2;font-weight:bold;transform:scaleX(0.855);transform-origin:0 0;">Export...</div>
<svg width="1024" height="676" style="top:0"><rect x="732.7" y="211.6" width="74.8" height="88" fill="none" stroke="#ff0a0a" stroke-width="4" rx="1"/><rect x="848" y="474.8" width="65.2" height="27" fill="none" stroke="#ff0a0a" stroke-width="4.5" rx="1"/><rect x="873.5" y="614.2" width="69.1" height="29.8" fill="none" stroke="#ff0a0a" stroke-width="4" rx="1"/><path d="M540.4 474.4 L718.0 318.2 L720.1 320.5 L725.0 309.5 L713.5 313.1 L715.6 315.5 L539.6 473.6Z" fill="#dd0a0a"/><path d="M812.9 305.7 L868.9 457.8 L865.9 459.0 L874.5 467.5 L875.3 455.4 L872.3 456.6 L814.1 305.3Z" fill="#dd0a0a"/><path d="M886.5 510.0 L887.7 593.5 L883.4 593.7 L889.7 604.5 L895.4 593.3 L891.1 593.5 L887.9 510.0Z" fill="#dd0a0a"/></svg>
<svg width="1024" height="676" style="top:0"><rect x="993" y="160.5" width="31" height="1.2" fill="#3e3e3e"/><rect x="993" y="224" width="31" height="1.2" fill="#3e3e3e"/><rect x="993" y="261" width="31" height="1.2" fill="#3e3e3e"/><rect x="993" y="299" width="31" height="1.2" fill="#3e3e3e"/><rect x="1001" y="75" width="1" height="3" fill="#2f2f2f"/><rect x="1003" y="75" width="1" height="3" fill="#2f2f2f"/><rect x="1005" y="75" width="1" height="3" fill="#2f2f2f"/><rect x="1007" y="75" width="1" height="3" fill="#2f2f2f"/><rect x="1009" y="75" width="1" height="3" fill="#2f2f2f"/><rect x="1011" y="75" width="1" height="3" fill="#2f2f2f"/><rect x="1013" y="75" width="1" height="3" fill="#2f2f2f"/><rect x="1015" y="75" width="1" height="3" fill="#2f2f2f"/><rect x="1017" y="75" width="1" height="3" fill="#2f2f2f"/><rect x="1001" y="164.5" width="1" height="3" fill="#2f2f2f"/><rect x="1003" y="164.5" width="1" height="3" fill="#2f2f2f"/><rect x="1005" y="164.5" width="1" height="3" fill="#2f2f2f"/><rect x="1007" y="164.5" width="1" height="3" fill="#2f2f2f"/><rect x="1009" y="164.5" width="1" height="3" fill="#2f2f2f"/><rect x="1011" y="164.5" width="1" height="3" fill="#2f2f2f"/><rect x="1013" y="164.5" width="1" height="3" fill="#2f2f2f"/><rect x="1015" y="164.5" width="1" height="3" fill="#2f2f2f"/><rect x="1017" y="164.5" width="1" height="3" fill="#2f2f2f"/><rect x="1001" y="227.8" width="1" height="3" fill="#2f2f2f"/><rect x="1003" y="227.8" width="1" height="3" fill="#2f2f2f"/><rect x="1005" y="227.8" width="1" height="3" fill="#2f2f2f"/><rect x="1007" y="227.8" width="1" height="3" fill="#2f2f2f"/><rect x="1009" y="227.8" width="1" height="3" fill="#2f2f2f"/><rect x="1011" y="227.8" width="1" height="3" fill="#2f2f2f"/><rect x="1013" y="227.8" width="1" height="3" fill="#2f2f2f"/><rect x="1015" y="227.8" width="1" height="3" fill="#2f2f2f"/><rect x="1017" y="227.8" width="1" height="3" fill="#2f2f2f"/><rect x="1001" y="265.5" width="1" height="3" fill="#2f2f2f"/><rect x="1003" y="265.5" width="1" height="3" fill="#2f2f2f"/><rect x="1005" y="265.5" width="1" height="3" fill="#2f2f2f"/><rect x="1007" y="265.5" width="1" height="3" fill="#2f2f2f"/><rect x="1009" y="265.5" width="1" height="3" fill="#2f2f2f"/><rect x="1011" y="265.5" width="1" height="3" fill="#2f2f2f"/><rect x="1013" y="265.5" width="1" height="3" fill="#2f2f2f"/><rect x="1015" y="265.5" width="1" height="3" fill="#2f2f2f"/><rect x="1017" y="265.5" width="1" height="3" fill="#2f2f2f"/><rect x="1004" y="88.5" width="14" height="10.5" fill="none" stroke="#c8c8c8" stroke-width="1.2"/><path d="M1004 93.7 L1018 93.7 M1008.5 88.5 L1008.5 99 M1013.5 88.5 L1013.5 99" stroke="#c8c8c8" stroke-width="1"/><rect x="1009" y="89" width="4.5" height="4.5" fill="#c8c8c8"/><rect x="1004.5" y="94" width="4" height="4.5" fill="#888"/><rect x="1014" y="94" width="4" height="4.5" fill="#888"/><rect x="1005.5" y="118.5" width="10" height="9" rx="1" fill="#c8c8c8"/><path d="M1007 118 L1004.5 111 M1010.5 118 L1010.5 110 M1014 118 L1017 112" stroke="#c8c8c8" stroke-width="1.5"/><circle cx="1004.5" cy="111" r="1.8" fill="#c8c8c8"/><circle cx="1010.5" cy="110" r="2" fill="#c8c8c8"/><ellipse cx="1017" cy="112" rx="2.5" ry="1.7" fill="#c8c8c8"/><circle cx="1010.5" cy="139.5" r="3.5" fill="#c8c8c8"/><circle cx="1006.5" cy="145" r="3.5" fill="#c8c8c8"/><circle cx="1014.5" cy="145" r="3.5" fill="#c8c8c8"/><path d="M1010.5 142 L1009 151.5 L1007 152.5 L1014 152.5 L1012 151.5 Z" fill="#c8c8c8"/><circle cx="1010.5" cy="182.2" r="5" fill="#c8c8c8"/><circle cx="1010.5" cy="182.2" r="7.3" fill="none" stroke="#c8c8c8" stroke-width="1" stroke-dasharray="1.2 1.3"/><rect x="1008" y="200.5" width="10" height="10" fill="none" stroke="#c8c8c8" stroke-width="1.2"/><rect x="1004" y="208" width="6" height="6" fill="#535353" stroke="#c8c8c8" stroke-width="1.1"/><rect x="1006" y="210" width="3" height="3" fill="#c8c8c8"/><defs><linearGradient id="rg" x1="0" x2="1"><stop offset="0" stop-color="#2a2a2a"/><stop offset="1" stop-color="#f2f2f2"/></linearGradient></defs><rect x="1003.5" y="240" width="14" height="11.5" fill="url(#rg)" stroke="#c8c8c8" stroke-width="1"/><path d="M1010.5 276 L1018 280.5 L1010.5 285 L1003 280.5 Z" fill="#c8c8c8"/><path d="M1003 284 L1010.5 288.5 L1018 284" fill="none" stroke="#c8c8c8" stroke-width="1.8"/><path d="M980 96 L983 93 L986 96" stroke="#bdbdbd" stroke-width="1.2" fill="none"/><rect x="976.5" y="378" width="13" height="25" rx="6.5" fill="#5e5e5e"/><path d="M980 646 L983 649 L986 646" stroke="#9a9a9a" stroke-width="1.2" fill="none"/><rect x="70.5" y="657" width="47" height="14" fill="#414141"/><rect x="118" y="657" width="16" height="14" fill="#4a4a4a"/><path d="M122.5 662.5 L126 666 L129.5 662.5" stroke="#e0e0e0" stroke-width="1.4" fill="none"/><rect x="134.5" y="657" width="38.5" height="14" fill="#4d4d4d"/><rect x="143" y="660.5" width="1.3" height="8" fill="#cfcfcf"/><path d="M150.5 660.5 L145 664.5 L150.5 668.5 Z" fill="#cfcfcf"/><path d="M165 660.5 L159.5 664.5 L165 668.5 Z" fill="#cfcfcf"/><rect x="173" y="657" width="38" height="14" fill="#414141"/><rect x="211" y="657" width="16" height="14" fill="#4a4a4a"/><path d="M215.5 662.5 L219 666 L222.5 662.5" stroke="#e0e0e0" stroke-width="1.4" fill="none"/><rect x="227.5" y="657" width="38.5" height="14" fill="#4d4d4d"/><path d="M237 660.5 L242.5 664.5 L237 668.5 Z" fill="#cfcfcf"/><path d="M249.5 660.5 L255 664.5 L249.5 668.5 Z" fill="#cfcfcf"/><rect x="256" y="660.5" width="1.3" height="8" fill="#cfcfcf"/><rect x="266" y="657" width="1" height="14" fill="#3e3e3e"/><rect x="450" y="657" width="18.5" height="14" fill="#545454"/><path d="M456.5 660.5 L462 664.5 L456.5 668.5 Z" fill="#d6d6d6"/><path d="M476.5 661 L473.5 664 L476.5 667" stroke="#9a9a9a" stroke-width="1.2" fill="none"/><rect x="715" y="658.5" width="23" height="11.5" rx="5.75" fill="#5b5b5b"/><path d="M966.5 661 L969.5 664 L966.5 667" stroke="#9a9a9a" stroke-width="1.2" fill="none"/></svg>
<div class="t" style="left:74.6px;top:661.53px;font-size:10px;color:#e6e6e6;font-weight:normal;transform:scaleX(0.8958);transform-origin:0 0;">66.67%</div>
<div class="t" style="left:175.5px;top:661.53px;font-size:10px;color:#e6e6e6;font-weight:normal;transform:scaleX(0.8989);transform-origin:0 0;">3</div>
<div class="t" style="left:339.7px;top:662.46px;font-size:9.5px;color:#d6d6d6;font-weight:normal;transform:scaleX(0.9472);transform-origin:0 0;">Selection</div>
</body></html>
